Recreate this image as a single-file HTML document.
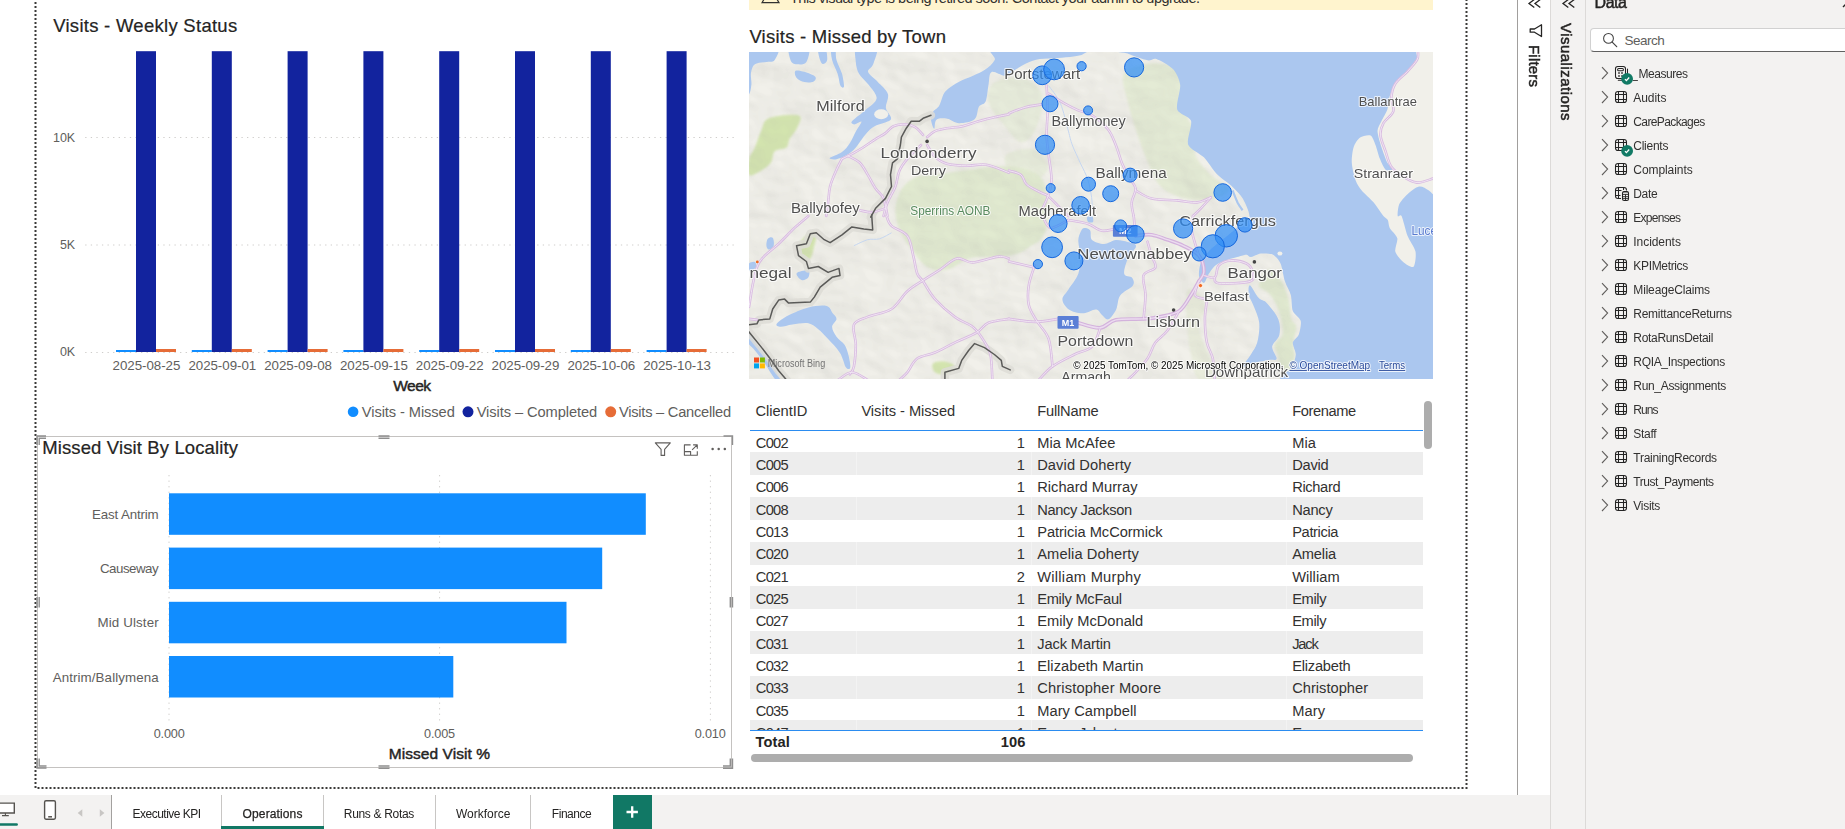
<!DOCTYPE html>
<html lang="en"><head><meta charset="utf-8"><title>Operations - Power BI</title>
<style>
html,body{margin:0;padding:0;background:#fff;}
body{width:1845px;height:829px;position:relative;overflow:hidden;font-family:"Liberation Sans",sans-serif;color:#252423;}
.t{position:absolute;white-space:pre;line-height:1;}
.abs{position:absolute;}
.g{color:#605e5c;}
svg{position:absolute;overflow:visible;}
</style></head><body>
<!-- report canvas -->
<div class="abs" id="canvas" style="left:0;top:0;width:1517px;height:795px;background:#fff;"></div>
<svg width="1845" height="829" style="left:0;top:0" id="canvas-border">
 <path d="M35.5 -2 V788 H1466.5 V-2" fill="none" stroke="#3b3a39" stroke-width="2" stroke-dasharray="2 2"/>
</svg>
<!-- Visits - Weekly Status (clustered column chart) -->
<section id="weekly">
<div class="t" style="left:53.20px;top:17.00px;font-size:18.5px;letter-spacing:0.275px;-webkit-text-stroke:0.2px #252423;">Visits - Weekly Status</div><svg width="1845" height="829" style="left:0;top:0"><line x1="85.2" x2="736" y1="137.5" y2="137.5" stroke="#cfcdcb" stroke-width="1" stroke-dasharray="1.3 4.28"/><line x1="85.2" x2="736" y1="245" y2="245" stroke="#cfcdcb" stroke-width="1" stroke-dasharray="1.3 4.28"/><line x1="85.2" x2="736" y1="352.5" y2="352.5" stroke="#cfcdcb" stroke-width="1" stroke-dasharray="1.3 4.28"/><rect x="116.0" y="350" width="20" height="2" fill="#118dff"/><rect x="136.0" y="51.2" width="20" height="300.8" fill="#12239e"/><rect x="156.0" y="349" width="20" height="3" fill="#e66c37"/><rect x="191.8" y="350" width="20" height="2" fill="#118dff"/><rect x="211.8" y="51.2" width="20" height="300.8" fill="#12239e"/><rect x="231.8" y="349" width="20" height="3" fill="#e66c37"/><rect x="267.6" y="350" width="20" height="2" fill="#118dff"/><rect x="287.6" y="51.2" width="20" height="300.8" fill="#12239e"/><rect x="307.6" y="349" width="20" height="3" fill="#e66c37"/><rect x="343.4" y="350" width="20" height="2" fill="#118dff"/><rect x="363.4" y="51.2" width="20" height="300.8" fill="#12239e"/><rect x="383.4" y="349" width="20" height="3" fill="#e66c37"/><rect x="419.2" y="350" width="20" height="2" fill="#118dff"/><rect x="439.2" y="51.2" width="20" height="300.8" fill="#12239e"/><rect x="459.2" y="349" width="20" height="3" fill="#e66c37"/><rect x="495.0" y="350" width="20" height="2" fill="#118dff"/><rect x="515.0" y="51.2" width="20" height="300.8" fill="#12239e"/><rect x="535.0" y="349" width="20" height="3" fill="#e66c37"/><rect x="570.8" y="350" width="20" height="2" fill="#118dff"/><rect x="590.8" y="51.2" width="20" height="300.8" fill="#12239e"/><rect x="610.8" y="349" width="20" height="3" fill="#e66c37"/><rect x="646.6" y="350" width="20" height="2" fill="#118dff"/><rect x="666.6" y="51.2" width="20" height="300.8" fill="#12239e"/><rect x="686.6" y="349" width="20" height="3" fill="#e66c37"/></svg>
<div class="t" style="left:52.95px;top:132.00px;font-size:12.5px;color:#605e5c;">10K</div><div class="t" style="left:59.90px;top:239.00px;font-size:12.5px;color:#605e5c;">5K</div><div class="t" style="left:59.90px;top:346.00px;font-size:12.5px;color:#605e5c;">0K</div><div class="t" style="left:112.60px;top:359.00px;font-size:13.33px;color:#605e5c;letter-spacing:-0.043px;">2025-08-25</div><div class="t" style="left:188.40px;top:359.00px;font-size:13.33px;color:#605e5c;letter-spacing:-0.043px;">2025-09-01</div><div class="t" style="left:264.20px;top:359.00px;font-size:13.33px;color:#605e5c;letter-spacing:-0.043px;">2025-09-08</div><div class="t" style="left:340.00px;top:359.00px;font-size:13.33px;color:#605e5c;letter-spacing:-0.043px;">2025-09-15</div><div class="t" style="left:415.80px;top:359.00px;font-size:13.33px;color:#605e5c;letter-spacing:-0.043px;">2025-09-22</div><div class="t" style="left:491.60px;top:359.00px;font-size:13.33px;color:#605e5c;letter-spacing:-0.043px;">2025-09-29</div><div class="t" style="left:567.40px;top:359.00px;font-size:13.33px;color:#605e5c;letter-spacing:-0.043px;">2025-10-06</div><div class="t" style="left:643.20px;top:359.00px;font-size:13.33px;color:#605e5c;letter-spacing:-0.043px;">2025-10-13</div><div class="t" style="left:393.30px;top:378.00px;font-size:15.5px;letter-spacing:-0.548px;-webkit-text-stroke:0.45px #252423;">Week</div><svg width="1845" height="829" style="left:0;top:0"><circle cx="353.1" cy="411.8" r="5.3" fill="#118dff"/><circle cx="468" cy="411.8" r="5.5" fill="#12239e"/><circle cx="610.7" cy="411.8" r="5.5" fill="#e66c37"/></svg><div class="t" style="left:361.80px;top:405.00px;font-size:14.67px;color:#605e5c;letter-spacing:-0.086px;">Visits - Missed</div><div class="t" style="left:476.70px;top:405.00px;font-size:14.67px;color:#605e5c;letter-spacing:-0.079px;">Visits – Completed</div><div class="t" style="left:618.90px;top:405.00px;font-size:14.67px;color:#605e5c;letter-spacing:-0.237px;">Visits – Cancelled</div>
</section>
<!-- Missed Visit By Locality (bar chart, selected) -->
<section id="locality">
<svg width="1845" height="829" style="left:0;top:0"><rect x="37.5" y="436.5" width="694" height="331" fill="none" stroke="#c4c2c0" stroke-width="1"/><g stroke="#8f8f8f" stroke-width="1.4" fill="none"><path d="M378.5 436 H389.5 M378.5 438.2 H389.5"/><path d="M378.5 766 H389.5 M378.5 768.2 H389.5"/><path d="M37 597 V607.5 M39.2 597 V607.5"/><path d="M730.3 597 V607.5 M732.5 597 V607.5"/><path d="M37 445 V436 H46 M39.2 445 V438.2 H46"/><path d="M723.5 436 H732.5 V445"/><path d="M37 758.5 V768 H46.5 M39.2 758.5 V766 H46.5"/><path d="M723 768.2 H732.5 V758.5 M723 766 H730.3 V758.5"/></g><line x1="169" x2="169" y1="475" y2="722" stroke="#cfcdcb" stroke-width="1" stroke-dasharray="1.3 4.25"/><line x1="439.6" x2="439.6" y1="475" y2="722" stroke="#cfcdcb" stroke-width="1" stroke-dasharray="1.3 4.25"/><line x1="710.4" x2="710.4" y1="475" y2="722" stroke="#cfcdcb" stroke-width="1" stroke-dasharray="1.3 4.25"/><rect x="169" y="493.3" width="476.8" height="41.5" fill="#118dff"/><rect x="169" y="547.6" width="433.2" height="41.5" fill="#118dff"/><rect x="169" y="601.8" width="397.5" height="41.5" fill="#118dff"/><rect x="169" y="656" width="284.3" height="41.5" fill="#118dff"/><g fill="none" stroke="#605e5c" stroke-width="1.1" stroke-linejoin="round"><path d="M655.3 442.9 H670.3 L664.6 449.4 V455.4 H661.1 V449.4 Z"/><path d="M690.6 444.9 H684.4 V455.2 H697.3 V451.3 M684.4 451.6 H690.6 V455.2 M693.1 444.9 H697.3 V448.7 M697 445.2 L692.1 449.8"/></g><g fill="#605e5c"><circle cx="712.6" cy="449" r="1.25"/><circle cx="718.7" cy="449" r="1.25"/><circle cx="724.8" cy="449" r="1.25"/></g></svg>
<div class="t" style="left:42.20px;top:439.00px;font-size:18.5px;letter-spacing:0.124px;-webkit-text-stroke:0.2px #252423;">Missed Visit By Locality</div><div class="t" style="left:92.10px;top:508.00px;font-size:13.33px;color:#605e5c;letter-spacing:-0.156px;">East Antrim</div><div class="t" style="left:100.00px;top:562.00px;font-size:13.33px;color:#605e5c;letter-spacing:-0.505px;">Causeway</div><div class="t" style="left:97.50px;top:616.00px;font-size:13.33px;color:#605e5c;letter-spacing:0.135px;">Mid Ulster</div><div class="t" style="left:52.70px;top:671.00px;font-size:13.33px;color:#605e5c;letter-spacing:0.103px;">Antrim/Ballymena</div><div class="t" style="left:153.70px;top:728.00px;font-size:12.7px;color:#605e5c;letter-spacing:-0.188px;">0.000</div><div class="t" style="left:424.10px;top:728.00px;font-size:12.7px;color:#605e5c;letter-spacing:-0.188px;">0.005</div><div class="t" style="left:694.70px;top:728.00px;font-size:12.7px;color:#605e5c;letter-spacing:-0.188px;">0.010</div><div class="t" style="left:388.70px;top:746.00px;font-size:15.5px;letter-spacing:0.062px;-webkit-text-stroke:0.45px #252423;">Missed Visit %</div>
</section>
<!-- Visits - Missed by Town (map) -->
<section id="town-map">
<div class="abs" style="left:749px;top:0;width:684px;height:9.7px;background:#fff4ce;overflow:hidden"></div><svg width="1845" height="12" style="left:0;top:0;overflow:hidden"><path d="M762 2.7 L770.5 -12 L779 2.7 Z" fill="none" stroke="#323130" stroke-width="1.2"/><path d="M770.5 -3 V-1" stroke="#323130" stroke-width="1.3"/></svg><div class="t" style="left:790.00px;top:-9.00px;font-size:14.5px;color:#323130;letter-spacing:-0.518px;">This visual type is being retired soon. Contact your admin to upgrade.</div><div class="t" style="left:749.40px;top:28.00px;font-size:18.5px;letter-spacing:0.228px;-webkit-text-stroke:0.2px #252423;">Visits - Missed by Town</div><svg id="map" width="684" height="327" viewBox="749 52 684 327" style="left:749px;top:52px;overflow:hidden" font-family="Liberation Sans, sans-serif">
<rect x="749" y="52" width="684" height="327" fill="#f1f0ea"/>
<defs><filter id="soft" x="-5%" y="-5%" width="110%" height="110%"><feGaussianBlur stdDeviation="1.3"/></filter></defs>
<g fill="#e1ead0" filter="url(#soft)">
<path d="M895.4 209.3 C895.7 202.7 898.0 194.7 901.3 189.4 C904.6 184.1 909.0 180.0 915.3 177.4 C921.6 174.9 929.9 175.6 939.2 174.3 C948.5 172.9 960.4 170.8 971.0 169.5 C981.6 168.1 993.6 166.3 1002.9 166.3 C1012.2 166.3 1020.0 167.0 1026.8 169.5 C1033.5 172.0 1040.0 174.8 1043.5 181.4 C1047.0 188.1 1047.6 201.3 1047.5 209.3 C1047.3 217.3 1046.2 222.6 1042.7 229.2 C1039.3 235.8 1033.4 244.5 1026.8 249.1 C1020.1 253.8 1012.2 255.6 1002.9 257.1 C993.6 258.5 980.3 255.8 971.0 257.9 C961.7 260.0 954.4 268.3 947.1 269.8 C939.8 271.4 933.2 270.5 927.2 267.0 C921.2 263.6 915.9 255.4 911.3 249.1 C906.6 242.8 902.0 235.8 899.3 229.2 C896.7 222.6 895.0 215.9 895.4 209.3Z"/>
<path opacity="0.6" d="M990.9 85.8 C993.9 81.5 1000.6 78.9 1006.9 77.9 C1013.2 76.9 1022.8 76.5 1028.8 79.9 C1034.7 83.2 1041.6 89.5 1042.7 97.8 C1043.8 106.1 1039.2 122.2 1035.5 129.6 C1031.9 137.1 1026.2 143.4 1020.8 142.4 C1015.4 141.4 1008.2 130.1 1002.9 123.7 C997.6 117.2 990.9 110.1 988.9 103.8 C986.9 97.5 987.9 90.2 990.9 85.8Z"/>
<path opacity="0.6" d="M1006.9 154.3 C1011.2 150.9 1028.0 147.0 1034.7 149.6 C1041.5 152.1 1048.5 164.0 1047.5 169.5 C1046.5 174.9 1035.2 182.1 1028.8 182.2 C1022.3 182.4 1012.5 174.9 1008.9 170.3 C1005.2 165.6 1002.5 157.8 1006.9 154.3Z"/>
<path opacity="0.8" d="M1123.9 73.9 C1127.5 67.5 1140.9 64.3 1149.7 63.5 C1158.6 62.7 1170.0 64.1 1176.8 69.1 C1183.6 74.2 1188.6 85.7 1190.4 93.8 C1192.2 101.9 1186.4 111.4 1187.6 117.7 C1188.8 124.0 1196.3 125.5 1197.5 131.6 C1198.8 137.7 1193.0 147.2 1195.1 154.3 C1197.3 161.4 1204.7 168.3 1210.3 174.3 C1215.8 180.2 1228.7 185.9 1228.6 190.2 C1228.5 194.4 1217.0 198.4 1209.5 199.7 C1202.0 201.1 1191.9 200.5 1183.6 198.1 C1175.3 195.8 1166.0 192.2 1159.7 185.4 C1153.4 178.6 1149.7 166.8 1145.8 157.5 C1141.8 148.2 1138.8 138.9 1135.8 129.6 C1132.8 120.4 1129.8 111.1 1127.8 101.8 C1125.8 92.5 1120.2 80.3 1123.9 73.9Z"/>
<path d="M1187.1 291.2 C1189.1 285.6 1196.0 290.2 1198.9 293.2 C1201.9 296.1 1204.9 303.4 1204.9 309.0 C1204.9 314.6 1198.3 319.2 1198.9 326.8 C1199.6 334.4 1204.9 345.6 1208.8 354.5 C1212.8 363.4 1224.3 375.8 1222.7 380.0 C1221.0 384.3 1204.2 384.3 1198.9 380.0 C1193.7 375.8 1193.0 363.4 1191.0 354.5 C1189.1 345.6 1187.7 337.4 1187.1 326.8 C1186.4 316.3 1185.1 296.8 1187.1 291.2Z" opacity="0.55"/>
<path d="M1268.7 269.4 C1272.5 268.8 1278.2 276.3 1281.5 281.3 C1284.8 286.2 1286.8 292.8 1288.5 299.1 C1290.1 305.4 1290.1 314.3 1291.4 318.9 C1292.7 323.5 1296.0 322.8 1296.4 326.8 C1296.7 330.7 1293.7 337.3 1293.4 342.6 C1293.1 347.9 1294.9 352.2 1294.4 358.4 C1293.9 364.7 1292.6 376.4 1290.4 380.0 C1288.3 383.6 1283.5 383.6 1281.5 380.0 C1279.6 376.4 1279.7 364.3 1278.6 358.4 C1277.4 352.5 1273.9 348.5 1274.6 344.6 C1275.3 340.6 1281.5 339.0 1282.5 334.7 C1283.6 330.4 1282.1 324.1 1280.9 318.9 C1279.8 313.6 1277.8 307.5 1275.6 303.0 C1273.4 298.6 1270.5 295.1 1267.7 292.2 C1264.9 289.2 1258.6 289.0 1258.8 285.2 C1258.9 281.4 1264.9 270.1 1268.7 269.4Z"/>
<path d="M1005.0 220.0 C1007.7 215.0 1013.9 216.3 1020.9 216.0 C1027.8 215.7 1043.3 214.0 1046.6 218.0 C1049.9 221.9 1044.9 234.8 1040.7 239.7 C1036.4 244.7 1026.8 246.7 1020.9 247.7 C1014.9 248.6 1007.7 250.3 1005.0 245.7 C1002.4 241.1 1002.4 224.9 1005.0 220.0Z"/>
</g>
<g fill="#d3e4ae" filter="url(#soft)">
<path d="M768.8 118.3 C775.1 115.6 793.7 113.8 798.5 115.3 C803.2 116.8 799.0 123.2 797.5 127.2 C796.0 131.1 791.4 135.7 789.6 139.1 C787.7 142.4 789.1 145.3 786.6 147.4 C784.1 149.4 777.4 148.8 774.7 151.3 C772.1 153.9 773.1 159.6 770.8 162.8 C768.5 166.0 764.5 168.7 760.9 170.7 C757.2 172.8 751.0 177.0 749.0 175.1 C747.0 173.1 748.0 163.5 749.0 158.8 C750.0 154.2 753.0 151.9 754.9 147.4 C756.9 142.8 758.6 136.4 760.9 131.5 C763.2 126.7 762.5 121.0 768.8 118.3Z"/>
<path d="M798.5 245.7 C799.5 241.6 805.4 235.8 808.4 233.8 C811.3 231.8 815.3 231.8 816.3 233.8 C817.3 235.8 815.3 241.6 814.3 245.7 C813.3 249.8 812.3 256.4 810.3 258.5 C808.4 260.7 804.4 260.7 802.4 258.5 C800.4 256.4 797.5 249.8 798.5 245.7Z"/>
<path d="M933.0 363.4 C934.7 361.6 941.3 360.9 944.9 361.4 C948.5 361.9 954.4 364.2 954.8 366.4 C955.1 368.5 950.2 373.3 946.9 374.3 C943.6 375.3 937.3 374.1 935.0 372.3 C932.7 370.5 931.4 365.2 933.0 363.4Z"/>
</g>
<defs><filter id="relief" x="0" y="0" width="100%" height="100%"><feTurbulence type="fractalNoise" baseFrequency="0.022 0.028" numOctaves="3" seed="11" result="n"/><feDiffuseLighting in="n" surfaceScale="2.6" diffuseConstant="1" lighting-color="#fff" result="l"><feDistantLight azimuth="315" elevation="55"/></feDiffuseLighting><feColorMatrix in="l" type="matrix" values="0 0 0 0 0.45  0 0 0 0 0.45  0 0 0 0 0.42  -2.2 0 0 0 1.95"/></filter></defs>
<rect x="749" y="52" width="684" height="327" filter="url(#relief)" opacity="0.5"/>
<g fill="#abc7ef">
<path d="M743.1 46.1 C737.5 54.5 742.1 88.4 743.1 96.5 C744.1 104.6 747.6 96.5 749.0 94.5 C750.4 92.6 751.0 88.3 751.4 84.6 C751.7 81.0 750.4 76.2 751.0 72.8 C751.6 69.4 752.3 66.1 754.9 64.3 C757.6 62.5 763.5 62.6 766.8 61.9 C770.1 61.2 773.1 62.6 774.7 59.9 C776.4 57.3 782.0 48.4 776.7 46.1 C771.4 43.8 748.7 37.7 743.1 46.1Z"/>
<path d="M789.6 46.1 C786.7 48.5 789.6 57.9 790.9 60.9 C792.3 63.9 794.9 64.1 797.5 64.3 C800.0 64.4 804.6 64.9 806.4 61.9 C808.2 58.9 811.2 48.7 808.4 46.1 C805.6 43.4 792.5 43.6 789.6 46.1Z"/>
<path d="M795.5 70.8 C796.8 69.8 801.1 70.8 804.4 71.8 C807.7 72.8 813.8 75.1 815.3 76.7 C816.8 78.4 815.1 80.8 813.3 81.7 C811.5 82.6 807.2 82.7 804.4 82.1 C801.6 81.4 798.0 79.6 796.5 77.7 C795.0 75.8 794.2 71.8 795.5 70.8Z"/>
<path d="M835.3 48.0 C836.2 50.0 835.3 55.6 836.5 59.9 C837.6 64.2 840.7 69.3 842.0 73.8 C843.2 78.2 844.2 84.6 844.0 86.6 C843.7 88.6 841.5 87.8 840.4 85.6 C839.4 83.5 839.0 78.1 837.6 73.8 C836.3 69.5 833.2 64.2 832.1 59.9 C831.0 55.6 830.6 50.0 831.1 48.0 C831.6 46.1 834.4 46.1 835.3 48.0Z"/>
<path d="M818.3 48.0 C819.2 46.4 823.7 46.1 825.2 48.0 C826.7 50.0 827.6 57.3 827.2 59.9 C826.7 62.6 823.9 64.2 822.6 63.9 C821.3 63.5 820.2 60.6 819.4 57.9 C818.7 55.3 817.3 49.7 818.3 48.0Z"/>
<path d="M856.8 46.1 C860.3 43.4 873.9 43.1 876.6 46.1 C879.4 49.0 874.7 59.6 873.3 63.9 C871.8 68.2 867.4 68.8 868.1 71.8 C868.8 74.8 874.3 78.0 877.6 81.7 C880.9 85.4 886.5 89.6 887.9 93.9 C889.3 98.3 885.4 103.8 885.9 107.8 C886.4 111.8 890.8 115.4 891.1 117.7 C891.3 120.0 890.0 120.3 887.5 121.6 C885.0 123.0 879.3 124.0 876.0 125.6 C872.8 127.3 870.8 128.9 868.1 131.5 C865.5 134.2 862.5 138.5 860.2 141.4 C857.9 144.4 856.6 147.0 854.3 149.3 C852.0 151.7 849.3 153.6 846.3 155.3 C843.4 156.9 839.2 158.8 836.5 159.2 C833.7 159.7 828.8 159.2 829.7 158.1 C830.7 156.9 838.6 154.6 842.0 152.1 C845.4 149.6 847.6 146.4 849.9 143.0 C852.2 139.6 853.9 135.1 855.8 131.5 C857.8 128.0 861.7 122.8 861.4 121.6 C861.1 120.5 855.8 124.5 854.3 124.4 C852.7 124.4 850.3 123.4 851.9 121.3 C853.5 119.1 859.9 114.7 863.8 111.4 C867.7 108.1 873.3 104.3 875.2 101.5 C877.2 98.7 876.9 97.5 875.6 94.5 C874.4 91.6 870.5 87.1 867.7 83.7 C864.9 80.2 861.0 77.4 859.0 73.8 C857.0 70.1 856.2 66.5 855.8 61.9 C855.5 57.3 853.4 48.7 856.8 46.1Z"/>
<path d="M996.3 46.1 C1011.4 43.8 1070.9 44.7 1085.4 46.1 C1099.9 47.4 1085.4 52.3 1083.4 54.0 C1081.4 55.7 1077.8 55.7 1073.5 56.4 C1069.2 57.0 1063.3 57.5 1057.7 57.9 C1052.1 58.4 1045.1 58.2 1039.9 59.1 C1034.6 60.0 1030.6 61.4 1026.0 63.5 C1021.4 65.6 1015.8 69.7 1012.2 71.8 C1008.5 73.8 1007.7 75.7 1004.2 75.7 C1000.8 75.8 994.0 70.5 991.4 72.2 C988.7 73.8 989.4 80.8 988.4 85.6 C987.5 90.5 987.2 97.9 985.6 101.5 C984.1 105.0 980.8 103.8 978.9 106.8 C977.1 109.8 977.9 116.5 974.6 119.3 C971.3 122.0 963.7 123.3 959.1 123.2 C954.6 123.1 951.1 119.3 947.3 118.7 C943.5 118.1 938.6 118.0 936.4 119.7 C934.2 121.4 935.1 128.8 934.2 128.8 C933.3 128.8 931.2 122.5 931.0 119.7 C930.8 116.8 931.6 114.1 933.0 111.8 C934.4 109.4 937.3 108.8 939.3 105.4 C941.4 102.1 942.0 95.5 945.3 91.6 C948.6 87.6 954.5 84.3 959.1 81.7 C963.7 79.0 968.7 77.7 973.0 75.7 C977.3 73.8 981.2 72.4 984.9 69.8 C988.5 67.2 992.8 63.9 994.7 59.9 C996.7 56.0 981.2 48.4 996.3 46.1Z"/>
<path d="M1084.2 227.9 C1085.7 227.8 1088.8 228.2 1090.1 230.2 C1091.4 232.3 1089.8 237.8 1092.1 240.1 C1094.4 242.4 1100.0 244.1 1104.0 244.1 C1107.9 244.1 1111.9 240.5 1115.8 240.1 C1119.8 239.8 1124.4 241.1 1127.7 242.1 C1131.1 243.1 1136.0 243.4 1136.0 246.1 C1136.1 248.7 1130.1 253.3 1128.1 257.9 C1126.1 262.6 1123.5 270.5 1124.2 273.8 C1124.8 277.1 1130.6 275.8 1132.1 277.7 C1133.5 279.7 1134.8 282.7 1132.9 285.6 C1130.9 288.6 1123.0 291.6 1120.2 295.5 C1117.4 299.5 1118.2 305.4 1116.2 309.4 C1114.3 313.3 1110.7 318.4 1108.3 319.3 C1106.0 320.2 1104.0 316.6 1102.0 314.9 C1100.0 313.3 1099.3 309.7 1096.1 309.4 C1092.8 309.1 1087.2 313.3 1082.6 313.3 C1078.1 313.3 1072.1 311.7 1068.8 309.4 C1065.4 307.1 1062.5 302.8 1062.4 299.5 C1062.4 296.2 1065.7 293.9 1068.4 289.6 C1071.0 285.3 1076.3 279.4 1078.3 273.8 C1080.2 268.2 1080.2 261.6 1080.2 256.0 C1080.2 250.4 1078.1 244.3 1078.3 240.1 C1078.4 236.0 1080.2 232.9 1081.2 230.8 C1082.2 228.8 1082.7 228.0 1084.2 227.9Z"/>
<path d="M1087.2 217.0 C1087.8 216.0 1091.1 215.2 1092.1 216.0 C1093.1 216.8 1093.8 220.9 1093.1 221.9 C1092.4 222.9 1089.1 222.8 1088.1 221.9 C1087.2 221.1 1086.5 218.0 1087.2 217.0Z"/>
<path d="M1119.8 46.1 C1075.5 49.2 1124.0 51.7 1127.7 53.6 C1131.4 55.5 1143.7 59.6 1147.5 60.3 C1151.3 61.0 1153.0 57.7 1156.4 58.9 C1159.8 60.1 1170.1 65.7 1173.2 69.2 C1176.4 72.7 1179.6 79.7 1180.2 85.0 C1180.7 90.4 1175.7 104.6 1177.2 109.4 C1178.6 114.1 1189.6 116.0 1191.0 120.7 C1192.5 125.3 1186.4 139.5 1188.1 144.4 C1189.8 149.3 1200.1 153.3 1203.9 157.3 C1207.7 161.2 1212.9 170.1 1216.8 174.1 C1220.6 178.0 1229.1 183.6 1232.6 186.9 C1236.1 190.2 1240.6 194.9 1242.9 198.8 C1245.1 202.7 1249.7 212.7 1249.4 216.0 C1249.2 219.4 1243.3 221.9 1241.0 224.0 C1238.7 226.1 1234.5 229.9 1232.0 232.0 C1229.5 234.1 1224.9 237.6 1222.0 240.0 C1219.1 242.4 1212.8 247.1 1210.0 250.0 C1207.2 252.9 1202.5 258.5 1201.0 262.0 C1199.5 265.5 1198.6 273.2 1199.0 276.0 C1199.4 278.8 1202.7 283.3 1204.0 283.0 C1205.3 282.7 1207.4 276.1 1208.8 273.8 C1210.3 271.5 1212.7 267.6 1214.8 265.9 C1216.9 264.1 1221.5 261.9 1224.7 260.7 C1227.8 259.5 1235.6 257.6 1238.5 256.8 C1241.4 256.0 1244.8 254.7 1246.4 254.8 C1248.1 254.8 1249.0 257.3 1250.9 257.1 C1252.8 257.0 1257.9 253.9 1260.8 253.6 C1263.7 253.2 1270.0 253.3 1272.6 254.6 C1275.3 255.9 1278.9 259.9 1280.5 263.5 C1282.2 267.0 1283.5 277.1 1284.9 281.3 C1286.3 285.5 1289.8 291.2 1290.8 295.1 C1291.9 299.1 1291.5 307.5 1292.8 311.0 C1294.1 314.4 1299.9 317.7 1300.7 320.8 C1301.5 324.0 1299.8 331.8 1298.7 334.7 C1297.7 337.6 1293.2 340.0 1292.8 342.6 C1292.4 345.2 1295.8 351.3 1295.8 354.5 C1295.8 357.6 1293.8 362.1 1292.8 366.3 C1291.8 370.6 1266.2 381.6 1288.5 386.1 C1310.7 390.6 1437.1 447.5 1460.0 400.0 C1482.9 352.5 1505.4 77.2 1460.0 30.0 C1414.6 -17.2 1164.1 42.9 1119.8 46.1Z"/>
<path d="M1249.9 285.2 C1251.5 285.7 1256.0 295.1 1258.8 298.1 C1261.6 301.1 1263.5 299.6 1266.7 303.0 C1269.9 306.5 1276.1 313.6 1278.2 318.9 C1280.3 324.1 1280.3 330.1 1279.4 334.7 C1278.4 339.3 1272.7 342.5 1272.2 346.6 C1271.8 350.6 1277.2 356.6 1276.6 358.8 C1276.0 361.1 1273.0 359.3 1268.7 360.0 C1264.4 360.8 1255.2 362.3 1250.9 363.4 C1246.6 364.4 1243.0 367.8 1243.0 366.3 C1243.0 364.9 1248.5 358.4 1250.9 354.5 C1253.2 350.5 1255.8 347.9 1257.2 342.6 C1258.6 337.3 1259.8 329.1 1259.2 322.8 C1258.5 316.6 1255.0 309.6 1253.2 305.0 C1251.5 300.4 1249.5 298.4 1248.9 295.1 C1248.3 291.8 1248.2 284.7 1249.9 285.2Z"/>
<path d="M776.7 323.8 C778.0 321.9 783.3 318.1 788.6 315.3 C793.8 312.6 802.0 309.0 808.4 307.4 C814.7 305.9 822.5 305.1 826.6 306.0 C830.6 307.0 830.8 310.8 832.5 313.0 C834.1 315.1 836.5 316.6 836.5 318.9 C836.4 321.2 832.1 323.8 832.1 326.8 C832.1 329.8 834.4 333.7 836.5 336.7 C838.5 339.7 842.4 341.6 844.4 344.6 C846.3 347.6 847.3 350.7 848.3 354.5 C849.3 358.3 850.7 365.2 850.3 367.4 C849.9 369.5 847.7 369.8 846.0 367.4 C844.2 365.0 843.0 357.6 840.0 352.9 C837.0 348.2 831.8 343.0 828.1 339.1 C824.5 335.1 821.5 331.8 818.3 329.2 C815.0 326.5 812.6 324.0 808.4 323.2 C804.1 322.5 797.1 323.8 792.5 324.4 C787.9 325.0 783.3 326.9 780.7 326.8 C778.0 326.7 775.4 325.7 776.7 323.8Z"/>
<path d="M767.8 238.8 C768.9 237.4 771.8 236.6 772.7 237.8 C773.7 238.9 774.4 243.7 773.7 245.7 C773.1 247.7 770.0 249.6 768.8 249.6 C767.6 249.6 766.6 247.5 766.4 245.7 C766.2 243.9 766.7 240.1 767.8 238.8Z"/>
<path d="M797.5 272.4 C799.3 271.4 806.5 269.6 808.4 270.4 C810.2 271.2 809.3 275.7 808.4 277.3 C807.4 279.0 804.2 280.5 802.4 280.3 C800.6 280.1 798.3 277.7 797.5 276.3 C796.7 275.0 795.7 273.4 797.5 272.4Z"/>
<path d="M749.0 263.5 C750.0 262.1 753.8 261.2 754.9 261.9 C756.1 262.6 756.9 266.0 755.9 267.4 C754.9 268.9 750.2 271.1 749.0 270.4 C747.8 269.8 748.0 264.9 749.0 263.5Z"/>
<path d="M748.0 332.7 C749.0 332.4 751.5 337.4 753.9 340.7 C756.4 344.0 759.7 348.2 762.9 352.5 C766.0 356.8 769.8 361.8 772.7 366.4 C775.7 371.0 780.2 377.8 780.7 380.0 C781.2 382.3 778.3 382.8 775.7 380.0 C773.1 377.3 768.3 368.3 764.8 363.4 C761.4 358.5 757.7 354.0 754.9 350.5 C752.1 347.1 749.2 345.6 748.0 342.6 C746.9 339.7 747.0 333.1 748.0 332.7Z"/>
</g>
<g fill="#f1f0ea">
<path d="M1418.0 46.1 C1412.8 47.9 1418.5 56.5 1417.0 59.9 C1415.6 63.3 1410.1 68.6 1407.2 71.8 C1404.2 74.9 1397.7 80.2 1395.3 83.7 C1392.9 87.1 1390.4 94.1 1389.3 97.5 C1388.3 100.9 1388.4 106.2 1387.4 109.4 C1386.3 112.5 1382.8 118.3 1381.4 121.2 C1380.1 124.1 1377.5 127.7 1377.5 131.1 C1377.5 134.6 1380.1 142.7 1381.4 147.0 C1382.8 151.2 1385.8 159.8 1387.4 162.8 C1389.0 165.7 1393.5 168.2 1393.3 169.1 C1393.1 170.1 1387.6 171.3 1385.8 169.9 C1384.0 168.5 1381.2 162.1 1379.9 158.8 C1378.5 155.5 1376.7 148.1 1375.5 145.0 C1374.3 141.9 1372.6 136.5 1370.6 135.5 C1368.5 134.5 1362.3 135.9 1360.1 137.5 C1357.8 139.0 1354.8 143.6 1353.7 147.0 C1352.6 150.3 1351.5 158.3 1351.8 162.8 C1352.0 167.3 1354.4 176.9 1355.7 180.6 C1357.0 184.3 1359.3 187.6 1361.7 190.5 C1364.0 193.4 1370.6 198.9 1373.5 202.3 C1376.4 205.7 1381.5 213.6 1383.4 216.0 C1385.3 218.3 1386.9 218.4 1387.8 220.0 C1388.6 221.5 1388.5 225.4 1389.7 227.9 C1391.0 230.3 1396.5 235.0 1397.3 238.2 C1398.0 241.3 1394.5 248.4 1395.3 251.6 C1396.1 254.8 1400.8 259.9 1403.2 261.9 C1405.6 263.9 1411.8 268.2 1413.5 266.8 C1415.1 265.5 1416.3 255.7 1415.5 251.6 C1414.7 247.5 1409.4 240.5 1407.5 235.8 C1405.7 231.0 1402.9 218.6 1401.6 216.0 C1400.3 213.4 1398.0 217.6 1397.7 216.0 C1397.3 214.4 1398.0 207.2 1399.2 204.3 C1400.5 201.4 1404.5 196.8 1407.2 194.4 C1409.8 192.1 1416.1 187.0 1419.0 186.5 C1421.9 186.0 1426.0 188.4 1428.9 190.5 C1431.8 192.6 1437.1 198.9 1440.8 202.3 C1444.5 205.7 1454.5 236.8 1456.6 216.0 C1458.7 195.2 1461.7 68.7 1456.6 46.1 C1451.5 23.4 1423.3 44.2 1418.0 46.1Z"/>
<ellipse cx="881.2" cy="114.3" rx="7" ry="5"/>
<ellipse cx="1279.9" cy="253.6" rx="2.5" ry="2"/>
</g>
<path d="M1232.6 190.5 C1233.4 192.5 1235.9 199.1 1237.5 202.4 C1239.2 205.7 1241.7 209.0 1242.5 210.3" fill="none" stroke="#abc7ef" stroke-width="2.2"/>
<g fill="none" stroke="#c5d6f0" stroke-width="1">
<path d="M1048.6 85.6 C1050.6 88.6 1057.1 95.9 1060.4 103.4 C1063.7 111.0 1066.4 124.2 1068.4 131.1 C1070.3 138.1 1070.3 139.7 1072.3 145.0 C1074.3 150.3 1077.6 156.9 1080.2 162.8 C1082.9 168.7 1086.2 174.0 1088.1 180.6 C1090.1 187.2 1091.8 196.5 1092.1 202.4 C1092.4 208.3 1090.5 213.8 1090.1 216.0"/>
<path d="M853.9 245.7 C856.2 244.7 863.4 240.9 867.7 239.7 C872.0 238.6 875.6 239.9 879.6 238.8 C883.5 237.6 889.5 233.8 891.5 232.8"/>
</g>
<g fill="none" stroke-linejoin="round" stroke-linecap="round">
<path d="M931.0 115.3 L923.1 118.3 L919.2 121.3 L911.2 121.3 L906.3 128.2 L901.4 137.1 L900.4 145.0 L897.4 158.8 L892.5 162.8 L890.5 174.7 L891.5 186.5 L885.5 198.4 L875.6 208.3 L870.7 217.2" stroke="#dddcd6" stroke-width="8.5" opacity="0.85"/>
<path d="M871.7 215.0 L872.7 229.9 L863.8 228.9 L851.9 226.9 L842.0 234.8 L830.1 242.7 L824.2 239.7 L816.3 232.8 L810.3 233.8 L806.4 243.7 L796.5 245.7 L798.5 255.6 L806.4 261.5 L808.4 268.4 L818.3 266.5 L828.1 272.4 L839.0 268.4 L840.0 275.4 L832.1 277.3 L820.2 287.2 L814.3 297.1 L810.3 302.1 L788.6 303.1 L784.6 299.1 L778.7 300.1 L772.7 309.0 L769.8 318.9 L758.9 319.9 L756.9 323.8 L748.0 324.8" stroke="#dddcd6" stroke-width="8.5" opacity="0.85"/>
<path d="M748.0 330.8 L760.9 346.6 L770.8 359.5 L778.7 370.7 L787.6 381.2" stroke="#dddcd6" stroke-width="8.5" opacity="0.85"/>
<path d="M944.9 381.2 L944.9 372.3 L958.7 368.4 L961.7 360.4 L968.6 350.5 L974.6 343.6 L984.5 347.6 L994.4 354.5 L1001.3 360.4 L1002.3 366.4 L1010.2 369.9" stroke="#dddcd6" stroke-width="8.5" opacity="0.85"/>
<path d="M927.1 137.1 C928.4 136.1 931.7 132.6 935.0 131.1 C938.3 129.7 942.2 129.0 946.9 128.2 C951.5 127.4 957.4 127.4 962.7 126.2 C968.0 125.0 973.2 122.7 978.5 121.3 C983.8 119.8 989.3 118.4 994.4 117.3 C999.4 116.1 1006.6 114.8 1009.0 114.3" stroke="#d8bbe0" stroke-width="2.6"/>
<path d="M923.1 135.1 C921.8 133.8 918.2 129.0 915.2 127.2 C912.2 125.4 908.9 124.4 905.3 124.2 C901.7 124.1 896.7 124.7 893.4 126.2 C890.1 127.7 888.5 131.0 885.5 133.1 C882.6 135.3 879.3 136.8 875.6 139.1 C872.0 141.4 867.4 144.7 863.8 147.0 C860.1 149.3 857.5 150.9 853.9 152.9 C850.2 154.9 844.0 157.9 842.0 158.8" stroke="#d8bbe0" stroke-width="2.6"/>
<path d="M842.0 158.8 C841.0 160.8 838.0 166.1 836.1 170.7 C834.1 175.3 831.4 181.3 830.1 186.5 C828.8 191.8 828.8 197.5 828.1 202.4 C827.5 207.3 826.5 213.8 826.2 216.0" stroke="#d8bbe0" stroke-width="2.6"/>
<path d="M847.9 155.9 C849.9 157.0 856.5 159.7 859.8 162.8 C863.1 165.9 865.1 170.4 867.7 174.7 C870.4 179.0 873.0 184.6 875.6 188.5 C878.3 192.5 881.6 193.8 883.5 198.4 C885.5 203.0 886.8 213.1 887.5 216.0" stroke="#d8bbe0" stroke-width="2.6"/>
<path d="M927.1 145.0 C928.4 147.0 931.7 153.7 935.0 156.9 C938.3 160.0 941.6 162.3 946.9 163.8 C952.1 165.3 960.1 165.6 966.6 165.8 C973.2 165.9 979.4 163.6 986.4 164.8 C993.5 165.9 1005.2 171.4 1009.0 172.7" stroke="#d8bbe0" stroke-width="2.6"/>
<path d="M921.1 145.0 C918.8 147.3 910.9 154.6 907.3 158.8 C903.7 163.1 901.4 166.1 899.4 170.7 C897.4 175.3 897.4 181.3 895.4 186.5 C893.4 191.8 889.5 197.5 887.5 202.4 C885.5 207.3 884.2 213.8 883.5 216.0" stroke="#d8bbe0" stroke-width="2.6"/>
<path d="M859.8 210.3 C861.8 210.6 867.4 212.6 871.7 212.3 C876.0 211.9 883.2 209.0 885.5 208.3" stroke="#d8bbe0" stroke-width="2.6"/>
<path d="M808.4 216.0 C806.1 218.0 799.5 223.3 794.5 227.9 C789.6 232.5 784.0 238.8 778.7 243.7 C773.4 248.6 766.5 253.6 762.9 257.6 C759.2 261.5 758.6 263.2 756.9 267.4 C755.3 271.7 754.3 276.7 753.0 283.3 C751.6 289.9 749.7 303.1 749.0 307.0" stroke="#d8bbe0" stroke-width="2.6"/>
<path d="M886.5 216.0 C887.3 217.6 888.0 222.6 891.5 225.9 C894.9 229.2 903.7 230.8 907.3 235.8 C910.9 240.7 911.6 249.3 913.2 255.6 C914.9 261.8 915.5 269.1 917.2 273.4 C918.8 277.7 920.2 277.0 923.1 281.3 C926.1 285.6 929.7 293.2 935.0 299.1 C940.3 305.0 948.5 312.3 954.8 316.9 C961.0 321.5 968.0 323.2 972.6 326.8 C977.2 330.4 979.5 334.1 982.5 338.7 C985.4 343.3 988.7 347.6 990.4 354.5 C992.0 361.4 992.0 375.8 992.4 380.0" stroke="#d8bbe0" stroke-width="2.6"/>
<path d="M1009.0 258.5 C1007.2 258.2 1004.4 255.9 998.3 256.6 C992.2 257.2 979.5 262.2 972.6 262.5 C965.7 262.8 962.4 257.2 956.8 258.5 C951.2 259.9 944.6 266.8 938.9 270.4 C933.3 274.0 928.4 276.8 923.1 280.3 C917.8 283.8 912.6 286.4 907.3 291.2 C902.0 296.0 898.1 304.7 891.5 309.0 C884.9 313.3 874.0 314.3 867.7 316.9 C861.5 319.5 855.8 320.2 853.9 324.8 C851.9 329.4 855.8 337.7 855.8 344.6 C855.8 351.5 854.9 361.4 853.9 366.4 C852.9 371.3 850.6 373.0 849.9 374.3" stroke="#d8bbe0" stroke-width="2.6"/>
<path d="M1009.0 318.9 C1005.6 319.5 993.8 320.5 988.4 322.8 C983.0 325.2 982.1 329.4 976.5 332.7 C970.9 336.0 961.7 339.3 954.8 342.6 C947.9 345.9 941.3 349.9 935.0 352.5 C928.7 355.2 921.8 355.2 917.2 358.5 C912.6 361.8 910.3 368.7 907.3 372.3 C904.3 375.9 900.7 378.7 899.4 380.0" stroke="#d8bbe0" stroke-width="2.6"/>
<path d="M838.0 380.0 C840.3 378.7 846.9 372.3 851.9 372.3 C856.8 372.3 865.1 378.7 867.7 380.0" stroke="#d8bbe0" stroke-width="2.6"/>
<path d="M749.0 318.9 L756.9 319.9" stroke="#d8bbe0" stroke-width="2.6"/>
<path d="M1046.6 85.6 C1046.8 89.9 1047.6 103.1 1047.6 111.4 C1047.6 119.6 1046.4 127.8 1046.6 135.1 C1046.8 142.4 1047.7 147.6 1048.6 154.9 C1049.4 162.1 1051.5 172.0 1051.5 178.6 C1051.5 185.2 1050.1 189.5 1048.6 194.5 C1047.1 199.4 1043.6 206.0 1042.6 208.3" stroke="#d8bbe0" stroke-width="2.6"/>
<path d="M1048.6 93.6 C1051.2 95.2 1059.5 100.6 1064.4 103.4 C1069.3 106.2 1073.6 108.4 1078.3 110.4 C1082.9 112.3 1087.2 112.2 1092.1 115.3 C1097.0 118.4 1104.0 124.2 1107.9 129.2 C1111.9 134.1 1113.5 139.4 1115.8 145.0 C1118.2 150.6 1119.5 157.2 1121.8 162.8 C1124.1 168.4 1127.4 174.3 1129.7 178.6 C1132.0 182.9 1135.3 184.6 1135.6 188.5 C1136.0 192.5 1132.0 197.8 1131.7 202.4 C1131.3 207.0 1133.3 213.8 1133.7 216.0" stroke="#d8bbe0" stroke-width="2.6"/>
<path d="M1009.0 113.3 C1011.6 112.3 1019.4 108.9 1024.8 107.4 C1030.3 105.9 1038.8 104.9 1041.6 104.4" stroke="#d8bbe0" stroke-width="2.6"/>
<path d="M1009.0 170.7 C1011.0 171.4 1017.9 172.4 1020.9 174.7 C1023.8 177.0 1023.5 181.6 1026.8 184.6 C1030.1 187.5 1037.0 190.5 1040.7 192.5 C1044.3 194.5 1045.3 193.8 1048.6 196.4 C1051.9 199.1 1057.1 205.0 1060.4 208.3 C1063.7 211.6 1067.0 214.7 1068.4 216.0" stroke="#d8bbe0" stroke-width="2.6"/>
<path d="M1135.6 190.5 C1138.3 191.8 1144.5 196.8 1151.5 198.4 C1158.4 200.1 1169.6 199.7 1177.2 200.4 C1184.8 201.1 1191.4 202.9 1197.0 202.4 C1202.6 201.9 1208.5 198.3 1210.8 197.4" stroke="#d8bbe0" stroke-width="2.6"/>
<path d="M1210.8 197.4 C1209.2 199.2 1203.9 205.2 1200.9 208.3 C1198.0 211.4 1194.3 214.7 1193.0 216.0" stroke="#d8bbe0" stroke-width="2.6"/>
<path d="M1068.4 220.0 C1071.7 220.6 1082.5 222.1 1088.1 223.9 C1093.8 225.7 1096.7 230.0 1102.0 230.8 C1107.3 231.7 1114.2 228.0 1119.8 228.9 C1125.4 229.7 1133.0 234.6 1135.6 235.8" stroke="#d8bbe0" stroke-width="2.6"/>
<path d="M1143.5 318.9 C1143.9 314.9 1145.5 302.4 1145.5 295.1 C1145.5 287.9 1141.9 280.0 1143.5 275.4 C1145.2 270.7 1154.1 270.7 1155.4 267.4 C1156.7 264.1 1152.8 259.9 1151.5 255.6 C1150.1 251.3 1148.2 244.0 1147.5 241.7" stroke="#d8bbe0" stroke-width="2.6"/>
<path d="M1133.7 216.0 L1135.6 235.8" stroke="#d8bbe0" stroke-width="2.6"/>
<path d="M1034.7 265.5 C1033.7 268.8 1029.8 278.7 1028.8 285.3 C1027.8 291.8 1027.5 299.1 1028.8 305.0 C1030.1 311.0 1033.4 315.3 1036.7 320.9 C1040.0 326.5 1045.9 331.1 1048.6 338.7 C1051.2 346.3 1051.9 361.8 1052.5 366.4" stroke="#d8bbe0" stroke-width="2.6"/>
<path d="M1009.0 261.5 L1034.7 267.4" stroke="#d8bbe0" stroke-width="2.6"/>
<path d="M1009.0 318.9 C1013.3 319.4 1026.5 321.9 1034.7 321.9 C1043.0 321.9 1054.5 319.4 1058.5 318.9" stroke="#d8bbe0" stroke-width="2.6"/>
<path d="M1100.0 328.8 C1098.7 331.7 1096.4 342.3 1092.1 346.6 C1087.8 350.9 1080.9 351.2 1074.3 354.5 C1067.7 357.8 1058.5 362.1 1052.5 366.4 C1046.6 370.6 1041.0 377.8 1038.7 380.0" stroke="#d8bbe0" stroke-width="2.6"/>
<path d="M1179.2 311.0 C1177.2 314.3 1171.2 325.5 1167.3 330.8 C1163.3 336.0 1158.7 338.0 1155.4 342.6 C1152.1 347.2 1150.8 353.5 1147.5 358.5 C1144.2 363.4 1138.9 368.7 1135.6 372.3 C1132.3 375.9 1129.0 378.7 1127.7 380.0" stroke="#d8bbe0" stroke-width="2.6"/>
<path d="M1203.9 275.4 C1205.7 275.7 1212.3 279.0 1214.8 277.3 C1217.3 275.7 1216.1 268.3 1218.7 265.5 C1221.4 262.7 1226.0 260.8 1230.6 260.5 C1235.2 260.2 1242.8 261.7 1246.4 263.5 C1250.1 265.3 1251.7 268.4 1252.4 271.4 C1253.0 274.4 1256.0 279.3 1250.4 281.3 C1244.8 283.3 1224.7 283.9 1218.7 283.3 C1212.8 282.6 1215.4 278.3 1214.8 277.3" stroke="#d8bbe0" stroke-width="2.6"/>
<path d="M1206.9 301.1 C1206.5 304.0 1204.9 312.0 1204.9 318.9 C1204.9 325.8 1205.5 336.0 1206.9 342.6 C1208.2 349.2 1211.5 352.2 1212.8 358.5 C1214.1 364.7 1214.4 376.4 1214.8 380.0" stroke="#d8bbe0" stroke-width="2.6"/>
<path d="M1193.0 216.0 C1192.8 218.6 1191.0 225.2 1192.0 231.8 C1193.0 238.4 1197.8 251.6 1198.9 255.6" stroke="#d8bbe0" stroke-width="2.6"/>
<path d="M1042.6 216.0 C1044.0 218.0 1046.3 227.2 1050.6 227.9 C1054.8 228.5 1065.4 221.3 1068.4 220.0" stroke="#d8bbe0" stroke-width="2.6"/>
<path d="M1198.9 281.3 C1198.3 283.6 1194.0 292.2 1195.0 295.1 C1196.0 298.1 1202.9 298.1 1204.9 299.1 C1206.9 300.1 1206.5 300.8 1206.9 301.1" stroke="#d8bbe0" stroke-width="2.6"/>
<path d="M1418.0 52.0 C1417.9 53.3 1418.9 56.6 1417.0 59.9 C1415.2 63.2 1410.8 67.8 1407.2 71.8 C1403.5 75.7 1397.9 79.4 1395.3 83.7 C1392.6 87.9 1391.7 92.9 1391.3 97.5 C1391.0 102.1 1394.6 107.1 1393.3 111.3 C1392.0 115.6 1385.6 119.3 1383.4 123.2 C1381.3 127.2 1380.1 130.5 1380.4 135.1 C1380.8 139.7 1383.6 145.6 1385.4 150.9 C1387.2 156.2 1388.4 162.5 1391.3 166.7 C1394.3 171.0 1398.9 174.0 1403.2 176.6 C1407.5 179.3 1412.1 182.2 1417.0 182.6 C1422.0 182.9 1430.2 179.3 1432.9 178.6" stroke="#d8bbe0" stroke-width="2.6"/>
<path d="M1135.6 235.8 C1138.3 235.6 1146.2 234.1 1151.5 234.8 C1156.7 235.5 1162.0 237.9 1167.3 239.7 C1172.6 241.6 1177.8 243.0 1183.1 245.7 C1188.4 248.3 1195.5 251.3 1198.9 255.6 C1202.4 259.9 1203.9 267.1 1203.9 271.4 C1203.9 275.7 1199.8 279.6 1198.9 281.3" stroke="#d3b2dc" stroke-width="3.8"/>
<path d="M1078.3 322.8 C1081.9 323.7 1093.8 328.3 1100.0 327.8 C1106.3 327.3 1108.6 321.4 1115.8 319.9 C1123.1 318.4 1136.3 319.4 1143.5 318.9 C1150.8 318.4 1153.4 318.2 1159.4 316.9 C1165.3 315.6 1173.9 314.6 1179.2 311.0 C1184.4 307.3 1187.7 300.1 1191.0 295.1 C1194.3 290.2 1197.6 283.6 1198.9 281.3" stroke="#d3b2dc" stroke-width="3.8"/>
<path d="M927.1 137.1 C928.4 136.1 931.7 132.6 935.0 131.1 C938.3 129.7 942.2 129.0 946.9 128.2 C951.5 127.4 957.4 127.4 962.7 126.2 C968.0 125.0 973.2 122.7 978.5 121.3 C983.8 119.8 989.3 118.4 994.4 117.3 C999.4 116.1 1006.6 114.8 1009.0 114.3" stroke="#f3e9f5" stroke-width="0.9"/>
<path d="M923.1 135.1 C921.8 133.8 918.2 129.0 915.2 127.2 C912.2 125.4 908.9 124.4 905.3 124.2 C901.7 124.1 896.7 124.7 893.4 126.2 C890.1 127.7 888.5 131.0 885.5 133.1 C882.6 135.3 879.3 136.8 875.6 139.1 C872.0 141.4 867.4 144.7 863.8 147.0 C860.1 149.3 857.5 150.9 853.9 152.9 C850.2 154.9 844.0 157.9 842.0 158.8" stroke="#f3e9f5" stroke-width="0.9"/>
<path d="M842.0 158.8 C841.0 160.8 838.0 166.1 836.1 170.7 C834.1 175.3 831.4 181.3 830.1 186.5 C828.8 191.8 828.8 197.5 828.1 202.4 C827.5 207.3 826.5 213.8 826.2 216.0" stroke="#f3e9f5" stroke-width="0.9"/>
<path d="M847.9 155.9 C849.9 157.0 856.5 159.7 859.8 162.8 C863.1 165.9 865.1 170.4 867.7 174.7 C870.4 179.0 873.0 184.6 875.6 188.5 C878.3 192.5 881.6 193.8 883.5 198.4 C885.5 203.0 886.8 213.1 887.5 216.0" stroke="#f3e9f5" stroke-width="0.9"/>
<path d="M927.1 145.0 C928.4 147.0 931.7 153.7 935.0 156.9 C938.3 160.0 941.6 162.3 946.9 163.8 C952.1 165.3 960.1 165.6 966.6 165.8 C973.2 165.9 979.4 163.6 986.4 164.8 C993.5 165.9 1005.2 171.4 1009.0 172.7" stroke="#f3e9f5" stroke-width="0.9"/>
<path d="M921.1 145.0 C918.8 147.3 910.9 154.6 907.3 158.8 C903.7 163.1 901.4 166.1 899.4 170.7 C897.4 175.3 897.4 181.3 895.4 186.5 C893.4 191.8 889.5 197.5 887.5 202.4 C885.5 207.3 884.2 213.8 883.5 216.0" stroke="#f3e9f5" stroke-width="0.9"/>
<path d="M859.8 210.3 C861.8 210.6 867.4 212.6 871.7 212.3 C876.0 211.9 883.2 209.0 885.5 208.3" stroke="#f3e9f5" stroke-width="0.9"/>
<path d="M808.4 216.0 C806.1 218.0 799.5 223.3 794.5 227.9 C789.6 232.5 784.0 238.8 778.7 243.7 C773.4 248.6 766.5 253.6 762.9 257.6 C759.2 261.5 758.6 263.2 756.9 267.4 C755.3 271.7 754.3 276.7 753.0 283.3 C751.6 289.9 749.7 303.1 749.0 307.0" stroke="#f3e9f5" stroke-width="0.9"/>
<path d="M886.5 216.0 C887.3 217.6 888.0 222.6 891.5 225.9 C894.9 229.2 903.7 230.8 907.3 235.8 C910.9 240.7 911.6 249.3 913.2 255.6 C914.9 261.8 915.5 269.1 917.2 273.4 C918.8 277.7 920.2 277.0 923.1 281.3 C926.1 285.6 929.7 293.2 935.0 299.1 C940.3 305.0 948.5 312.3 954.8 316.9 C961.0 321.5 968.0 323.2 972.6 326.8 C977.2 330.4 979.5 334.1 982.5 338.7 C985.4 343.3 988.7 347.6 990.4 354.5 C992.0 361.4 992.0 375.8 992.4 380.0" stroke="#f3e9f5" stroke-width="0.9"/>
<path d="M1009.0 258.5 C1007.2 258.2 1004.4 255.9 998.3 256.6 C992.2 257.2 979.5 262.2 972.6 262.5 C965.7 262.8 962.4 257.2 956.8 258.5 C951.2 259.9 944.6 266.8 938.9 270.4 C933.3 274.0 928.4 276.8 923.1 280.3 C917.8 283.8 912.6 286.4 907.3 291.2 C902.0 296.0 898.1 304.7 891.5 309.0 C884.9 313.3 874.0 314.3 867.7 316.9 C861.5 319.5 855.8 320.2 853.9 324.8 C851.9 329.4 855.8 337.7 855.8 344.6 C855.8 351.5 854.9 361.4 853.9 366.4 C852.9 371.3 850.6 373.0 849.9 374.3" stroke="#f3e9f5" stroke-width="0.9"/>
<path d="M1009.0 318.9 C1005.6 319.5 993.8 320.5 988.4 322.8 C983.0 325.2 982.1 329.4 976.5 332.7 C970.9 336.0 961.7 339.3 954.8 342.6 C947.9 345.9 941.3 349.9 935.0 352.5 C928.7 355.2 921.8 355.2 917.2 358.5 C912.6 361.8 910.3 368.7 907.3 372.3 C904.3 375.9 900.7 378.7 899.4 380.0" stroke="#f3e9f5" stroke-width="0.9"/>
<path d="M838.0 380.0 C840.3 378.7 846.9 372.3 851.9 372.3 C856.8 372.3 865.1 378.7 867.7 380.0" stroke="#f3e9f5" stroke-width="0.9"/>
<path d="M749.0 318.9 L756.9 319.9" stroke="#f3e9f5" stroke-width="0.9"/>
<path d="M1046.6 85.6 C1046.8 89.9 1047.6 103.1 1047.6 111.4 C1047.6 119.6 1046.4 127.8 1046.6 135.1 C1046.8 142.4 1047.7 147.6 1048.6 154.9 C1049.4 162.1 1051.5 172.0 1051.5 178.6 C1051.5 185.2 1050.1 189.5 1048.6 194.5 C1047.1 199.4 1043.6 206.0 1042.6 208.3" stroke="#f3e9f5" stroke-width="0.9"/>
<path d="M1048.6 93.6 C1051.2 95.2 1059.5 100.6 1064.4 103.4 C1069.3 106.2 1073.6 108.4 1078.3 110.4 C1082.9 112.3 1087.2 112.2 1092.1 115.3 C1097.0 118.4 1104.0 124.2 1107.9 129.2 C1111.9 134.1 1113.5 139.4 1115.8 145.0 C1118.2 150.6 1119.5 157.2 1121.8 162.8 C1124.1 168.4 1127.4 174.3 1129.7 178.6 C1132.0 182.9 1135.3 184.6 1135.6 188.5 C1136.0 192.5 1132.0 197.8 1131.7 202.4 C1131.3 207.0 1133.3 213.8 1133.7 216.0" stroke="#f3e9f5" stroke-width="0.9"/>
<path d="M1009.0 113.3 C1011.6 112.3 1019.4 108.9 1024.8 107.4 C1030.3 105.9 1038.8 104.9 1041.6 104.4" stroke="#f3e9f5" stroke-width="0.9"/>
<path d="M1009.0 170.7 C1011.0 171.4 1017.9 172.4 1020.9 174.7 C1023.8 177.0 1023.5 181.6 1026.8 184.6 C1030.1 187.5 1037.0 190.5 1040.7 192.5 C1044.3 194.5 1045.3 193.8 1048.6 196.4 C1051.9 199.1 1057.1 205.0 1060.4 208.3 C1063.7 211.6 1067.0 214.7 1068.4 216.0" stroke="#f3e9f5" stroke-width="0.9"/>
<path d="M1135.6 190.5 C1138.3 191.8 1144.5 196.8 1151.5 198.4 C1158.4 200.1 1169.6 199.7 1177.2 200.4 C1184.8 201.1 1191.4 202.9 1197.0 202.4 C1202.6 201.9 1208.5 198.3 1210.8 197.4" stroke="#f3e9f5" stroke-width="0.9"/>
<path d="M1210.8 197.4 C1209.2 199.2 1203.9 205.2 1200.9 208.3 C1198.0 211.4 1194.3 214.7 1193.0 216.0" stroke="#f3e9f5" stroke-width="0.9"/>
<path d="M1068.4 220.0 C1071.7 220.6 1082.5 222.1 1088.1 223.9 C1093.8 225.7 1096.7 230.0 1102.0 230.8 C1107.3 231.7 1114.2 228.0 1119.8 228.9 C1125.4 229.7 1133.0 234.6 1135.6 235.8" stroke="#f3e9f5" stroke-width="0.9"/>
<path d="M1143.5 318.9 C1143.9 314.9 1145.5 302.4 1145.5 295.1 C1145.5 287.9 1141.9 280.0 1143.5 275.4 C1145.2 270.7 1154.1 270.7 1155.4 267.4 C1156.7 264.1 1152.8 259.9 1151.5 255.6 C1150.1 251.3 1148.2 244.0 1147.5 241.7" stroke="#f3e9f5" stroke-width="0.9"/>
<path d="M1133.7 216.0 L1135.6 235.8" stroke="#f3e9f5" stroke-width="0.9"/>
<path d="M1034.7 265.5 C1033.7 268.8 1029.8 278.7 1028.8 285.3 C1027.8 291.8 1027.5 299.1 1028.8 305.0 C1030.1 311.0 1033.4 315.3 1036.7 320.9 C1040.0 326.5 1045.9 331.1 1048.6 338.7 C1051.2 346.3 1051.9 361.8 1052.5 366.4" stroke="#f3e9f5" stroke-width="0.9"/>
<path d="M1009.0 261.5 L1034.7 267.4" stroke="#f3e9f5" stroke-width="0.9"/>
<path d="M1009.0 318.9 C1013.3 319.4 1026.5 321.9 1034.7 321.9 C1043.0 321.9 1054.5 319.4 1058.5 318.9" stroke="#f3e9f5" stroke-width="0.9"/>
<path d="M1100.0 328.8 C1098.7 331.7 1096.4 342.3 1092.1 346.6 C1087.8 350.9 1080.9 351.2 1074.3 354.5 C1067.7 357.8 1058.5 362.1 1052.5 366.4 C1046.6 370.6 1041.0 377.8 1038.7 380.0" stroke="#f3e9f5" stroke-width="0.9"/>
<path d="M1179.2 311.0 C1177.2 314.3 1171.2 325.5 1167.3 330.8 C1163.3 336.0 1158.7 338.0 1155.4 342.6 C1152.1 347.2 1150.8 353.5 1147.5 358.5 C1144.2 363.4 1138.9 368.7 1135.6 372.3 C1132.3 375.9 1129.0 378.7 1127.7 380.0" stroke="#f3e9f5" stroke-width="0.9"/>
<path d="M1203.9 275.4 C1205.7 275.7 1212.3 279.0 1214.8 277.3 C1217.3 275.7 1216.1 268.3 1218.7 265.5 C1221.4 262.7 1226.0 260.8 1230.6 260.5 C1235.2 260.2 1242.8 261.7 1246.4 263.5 C1250.1 265.3 1251.7 268.4 1252.4 271.4 C1253.0 274.4 1256.0 279.3 1250.4 281.3 C1244.8 283.3 1224.7 283.9 1218.7 283.3 C1212.8 282.6 1215.4 278.3 1214.8 277.3" stroke="#f3e9f5" stroke-width="0.9"/>
<path d="M1206.9 301.1 C1206.5 304.0 1204.9 312.0 1204.9 318.9 C1204.9 325.8 1205.5 336.0 1206.9 342.6 C1208.2 349.2 1211.5 352.2 1212.8 358.5 C1214.1 364.7 1214.4 376.4 1214.8 380.0" stroke="#f3e9f5" stroke-width="0.9"/>
<path d="M1193.0 216.0 C1192.8 218.6 1191.0 225.2 1192.0 231.8 C1193.0 238.4 1197.8 251.6 1198.9 255.6" stroke="#f3e9f5" stroke-width="0.9"/>
<path d="M1042.6 216.0 C1044.0 218.0 1046.3 227.2 1050.6 227.9 C1054.8 228.5 1065.4 221.3 1068.4 220.0" stroke="#f3e9f5" stroke-width="0.9"/>
<path d="M1198.9 281.3 C1198.3 283.6 1194.0 292.2 1195.0 295.1 C1196.0 298.1 1202.9 298.1 1204.9 299.1 C1206.9 300.1 1206.5 300.8 1206.9 301.1" stroke="#f3e9f5" stroke-width="0.9"/>
<path d="M1418.0 52.0 C1417.9 53.3 1418.9 56.6 1417.0 59.9 C1415.2 63.2 1410.8 67.8 1407.2 71.8 C1403.5 75.7 1397.9 79.4 1395.3 83.7 C1392.6 87.9 1391.7 92.9 1391.3 97.5 C1391.0 102.1 1394.6 107.1 1393.3 111.3 C1392.0 115.6 1385.6 119.3 1383.4 123.2 C1381.3 127.2 1380.1 130.5 1380.4 135.1 C1380.8 139.7 1383.6 145.6 1385.4 150.9 C1387.2 156.2 1388.4 162.5 1391.3 166.7 C1394.3 171.0 1398.9 174.0 1403.2 176.6 C1407.5 179.3 1412.1 182.2 1417.0 182.6 C1422.0 182.9 1430.2 179.3 1432.9 178.6" stroke="#f3e9f5" stroke-width="0.9"/>
<path d="M1135.6 235.8 C1138.3 235.6 1146.2 234.1 1151.5 234.8 C1156.7 235.5 1162.0 237.9 1167.3 239.7 C1172.6 241.6 1177.8 243.0 1183.1 245.7 C1188.4 248.3 1195.5 251.3 1198.9 255.6 C1202.4 259.9 1203.9 267.1 1203.9 271.4 C1203.9 275.7 1199.8 279.6 1198.9 281.3" stroke="#ecdcf0" stroke-width="1.4"/>
<path d="M1078.3 322.8 C1081.9 323.7 1093.8 328.3 1100.0 327.8 C1106.3 327.3 1108.6 321.4 1115.8 319.9 C1123.1 318.4 1136.3 319.4 1143.5 318.9 C1150.8 318.4 1153.4 318.2 1159.4 316.9 C1165.3 315.6 1173.9 314.6 1179.2 311.0 C1184.4 307.3 1187.7 300.1 1191.0 295.1 C1194.3 290.2 1197.6 283.6 1198.9 281.3" stroke="#ecdcf0" stroke-width="1.4"/>
<path d="M931.0 115.3 L923.1 118.3 L919.2 121.3 L911.2 121.3 L906.3 128.2 L901.4 137.1 L900.4 145.0 L897.4 158.8 L892.5 162.8 L890.5 174.7 L891.5 186.5 L885.5 198.4 L875.6 208.3 L870.7 217.2" stroke="#5a5a58" stroke-width="1.5"/>
<path d="M871.7 215.0 L872.7 229.9 L863.8 228.9 L851.9 226.9 L842.0 234.8 L830.1 242.7 L824.2 239.7 L816.3 232.8 L810.3 233.8 L806.4 243.7 L796.5 245.7 L798.5 255.6 L806.4 261.5 L808.4 268.4 L818.3 266.5 L828.1 272.4 L839.0 268.4 L840.0 275.4 L832.1 277.3 L820.2 287.2 L814.3 297.1 L810.3 302.1 L788.6 303.1 L784.6 299.1 L778.7 300.1 L772.7 309.0 L769.8 318.9 L758.9 319.9 L756.9 323.8 L748.0 324.8" stroke="#5a5a58" stroke-width="1.5"/>
<path d="M748.0 330.8 L760.9 346.6 L770.8 359.5 L778.7 370.7 L787.6 381.2" stroke="#5a5a58" stroke-width="1.5"/>
<path d="M944.9 381.2 L944.9 372.3 L958.7 368.4 L961.7 360.4 L968.6 350.5 L974.6 343.6 L984.5 347.6 L994.4 354.5 L1001.3 360.4 L1002.3 366.4 L1010.2 369.9" stroke="#5a5a58" stroke-width="1.5"/>
</g>
<rect x="1057.5" y="315.9" width="21.1" height="12.9" rx="1" fill="#5b7fd6"/>
<text x="1068.0" y="325.6" font-size="9" font-weight="700" fill="#fff" text-anchor="middle">M1</text>
<rect x="1112.9" y="224.9" width="24.7" height="11.9" rx="1" fill="#5b7fd6"/>
<text x="1125.2" y="234.1" font-size="9" font-weight="700" fill="#fff" text-anchor="middle">M2</text>
<circle cx="927.1" cy="141.4" r="1.8" fill="#444"/>
<circle cx="1173.6" cy="310.0" r="1.8" fill="#444"/>
<circle cx="1254.4" cy="261.9" r="1.8" fill="#444"/>
<circle cx="1200.5" cy="285.6" r="2.1" fill="#f26a21" stroke="#fff" stroke-width="0.8"/>
<circle cx="757.3" cy="261.9" r="1.4" fill="#f26a21"/>
<text x="816.3" y="111.0" font-size="14.5" fill="#4f4f4f" textLength="48.4" lengthAdjust="spacingAndGlyphs" stroke="#fff" stroke-opacity="0.75" stroke-width="2.2" paint-order="stroke" stroke-linejoin="round">Milford</text>
<text x="880.6" y="157.9" font-size="15.5" fill="#4f4f4f" textLength="95.9" lengthAdjust="spacingAndGlyphs" stroke="#fff" stroke-opacity="0.75" stroke-width="2.2" paint-order="stroke" stroke-linejoin="round">Londonderry</text>
<text x="910.9" y="174.7" font-size="13.5" fill="#4f4f4f" textLength="35.0" lengthAdjust="spacingAndGlyphs" stroke="#fff" stroke-opacity="0.75" stroke-width="2.2" paint-order="stroke" stroke-linejoin="round">Derry</text>
<text x="790.9" y="213.3" font-size="14.5" fill="#4f4f4f" textLength="68.9" lengthAdjust="spacingAndGlyphs" stroke="#fff" stroke-opacity="0.75" stroke-width="2.2" paint-order="stroke" stroke-linejoin="round">Ballybofey</text>
<text x="910.3" y="215.2" font-size="12" fill="#588a5e" textLength="80.1" lengthAdjust="spacingAndGlyphs" stroke="#fff" stroke-opacity="0.75" stroke-width="2.2" paint-order="stroke" stroke-linejoin="round">Sperrins AONB</text>
<text x="727.5" y="278.3" font-size="15.5" fill="#4f4f4f" textLength="64.0" lengthAdjust="spacingAndGlyphs" stroke="#fff" stroke-opacity="0.75" stroke-width="2.2" paint-order="stroke" stroke-linejoin="round">Donegal</text>
<text x="1004.2" y="79.3" font-size="15" fill="#4f4f4f" textLength="76.0" lengthAdjust="spacingAndGlyphs" stroke="#fff" stroke-opacity="0.75" stroke-width="2.2" paint-order="stroke" stroke-linejoin="round">Portstewart</text>
<text x="1051.5" y="125.6" font-size="14.5" fill="#4f4f4f" textLength="74.2" lengthAdjust="spacingAndGlyphs" stroke="#fff" stroke-opacity="0.75" stroke-width="2.2" paint-order="stroke" stroke-linejoin="round">Ballymoney</text>
<text x="1095.5" y="178.0" font-size="14.5" fill="#4f4f4f" textLength="71.2" lengthAdjust="spacingAndGlyphs" stroke="#fff" stroke-opacity="0.75" stroke-width="2.2" paint-order="stroke" stroke-linejoin="round">Ballymena</text>
<text x="1018.5" y="216.0" font-size="14.5" fill="#4f4f4f" textLength="77.5" lengthAdjust="spacingAndGlyphs" stroke="#fff" stroke-opacity="0.75" stroke-width="2.2" paint-order="stroke" stroke-linejoin="round">Magherafelt</text>
<text x="1179.2" y="226.0" font-size="15" fill="#4f4f4f" textLength="96.8" lengthAdjust="spacingAndGlyphs" stroke="#fff" stroke-opacity="0.75" stroke-width="2.2" paint-order="stroke" stroke-linejoin="round">Carrickfergus</text>
<text x="1077.3" y="258.5" font-size="15.5" fill="#4f4f4f" textLength="114.7" lengthAdjust="spacingAndGlyphs" stroke="#fff" stroke-opacity="0.75" stroke-width="2.2" paint-order="stroke" stroke-linejoin="round">Newtownabbey</text>
<text x="1227.6" y="278.3" font-size="15.5" fill="#4f4f4f" textLength="54.4" lengthAdjust="spacingAndGlyphs" stroke="#fff" stroke-opacity="0.75" stroke-width="2.2" paint-order="stroke" stroke-linejoin="round">Bangor</text>
<text x="1203.9" y="300.7" font-size="13.5" fill="#4f4f4f" textLength="44.9" lengthAdjust="spacingAndGlyphs" stroke="#fff" stroke-opacity="0.75" stroke-width="2.2" paint-order="stroke" stroke-linejoin="round">Belfast</text>
<text x="1146.5" y="327.2" font-size="15.5" fill="#4f4f4f" textLength="53.5" lengthAdjust="spacingAndGlyphs" stroke="#fff" stroke-opacity="0.75" stroke-width="2.2" paint-order="stroke" stroke-linejoin="round">Lisburn</text>
<text x="1057.5" y="345.6" font-size="15" fill="#4f4f4f" textLength="75.8" lengthAdjust="spacingAndGlyphs" stroke="#fff" stroke-opacity="0.75" stroke-width="2.2" paint-order="stroke" stroke-linejoin="round">Portadown</text>
<text x="1057.3" y="381.5" font-size="14.5" fill="#4f4f4f" textLength="53.6" lengthAdjust="spacingAndGlyphs" stroke="#fff" stroke-opacity="0.75" stroke-width="2.2" paint-order="stroke" stroke-linejoin="round">.Armagh</text>
<text x="1204.9" y="376.5" font-size="14.5" fill="#4f4f4f" textLength="83.1" lengthAdjust="spacingAndGlyphs" stroke="#fff" stroke-opacity="0.75" stroke-width="2.2" paint-order="stroke" stroke-linejoin="round">Downpatrick</text>
<text x="1358.7" y="106.4" font-size="13.3" fill="#4f4f4f" textLength="58.3" lengthAdjust="spacingAndGlyphs" stroke="#fff" stroke-opacity="0.75" stroke-width="2.2" paint-order="stroke" stroke-linejoin="round">Ballantrae</text>
<text x="1353.7" y="177.6" font-size="13.3" fill="#4f4f4f" textLength="59.3" lengthAdjust="spacingAndGlyphs" stroke="#fff" stroke-opacity="0.75" stroke-width="2.2" paint-order="stroke" stroke-linejoin="round">Stranraer</text>
<text x="1411.5" y="235.2" font-size="13.3" fill="#5a7bd0" textLength="25.5" lengthAdjust="spacingAndGlyphs" stroke="#fff" stroke-opacity="0.75" stroke-width="2.2" paint-order="stroke" stroke-linejoin="round">Luce</text>
<g fill="#2f8df5" fill-opacity="0.72" stroke="#1466dc" stroke-width="1">
<circle cx="1042.2" cy="75.3" r="9.4"/>
<circle cx="1054.1" cy="69.4" r="10.4"/>
<circle cx="1081.6" cy="66.2" r="4.6"/>
<circle cx="1134.1" cy="67.4" r="9.6"/>
<circle cx="1050.0" cy="103.8" r="8.0"/>
<circle cx="1088.1" cy="110.4" r="4.5"/>
<circle cx="1045.0" cy="144.8" r="9.6"/>
<circle cx="1130.1" cy="175.1" r="7.0"/>
<circle cx="1050.7" cy="188.1" r="4.5"/>
<circle cx="1088.5" cy="184.2" r="7.0"/>
<circle cx="1110.7" cy="193.7" r="8.0"/>
<circle cx="1080.6" cy="205.3" r="8.8"/>
<circle cx="1222.7" cy="192.5" r="8.8"/>
<circle cx="1058.1" cy="223.5" r="9.0"/>
<circle cx="1052.1" cy="247.3" r="10.4"/>
<circle cx="1037.9" cy="264.1" r="4.6"/>
<circle cx="1073.9" cy="260.9" r="9.0"/>
<circle cx="1120.6" cy="225.9" r="6.0"/>
<circle cx="1135.4" cy="234.4" r="8.8"/>
<circle cx="1183.1" cy="228.5" r="9.6"/>
<circle cx="1244.9" cy="224.9" r="7.2"/>
<circle cx="1226.3" cy="235.8" r="11.2"/>
<circle cx="1212.8" cy="246.3" r="11.6"/>
<circle cx="1199.1" cy="254.0" r="7.0"/>
</g>
<g><rect x="754" y="357.5" width="5" height="5" fill="#f25022"/><rect x="759.9" y="357.5" width="5" height="5" fill="#7fba00"/><rect x="754" y="363.4" width="5" height="5" fill="#00a4ef"/><rect x="759.9" y="363.4" width="5" height="5" fill="#ffb900"/>
<text x="767.8" y="367.4" font-size="10" fill="#737373" textLength="57.4" lengthAdjust="spacingAndGlyphs">Microsoft Bing</text></g>
<g font-size="10" stroke="#fff" stroke-opacity="0.8" stroke-width="2" paint-order="stroke" stroke-linejoin="round">
<text x="1073.3" y="368.9" fill="#000" textLength="210.2" lengthAdjust="spacingAndGlyphs">© 2025 TomTom, © 2025 Microsoft Corporation,</text>
<text x="1289.4" y="368.9" fill="#2a4b9b" textLength="80.8" lengthAdjust="spacingAndGlyphs" text-decoration="underline">© OpenStreetMap</text>
<text x="1378.9" y="368.9" fill="#2a4b9b" textLength="26.3" lengthAdjust="spacingAndGlyphs" text-decoration="underline">Terms</text>
</g>
</svg>
</section>
<!-- table -->
<section id="missed-table">
<div class="abs" style="left:750px;top:430px;width:673px;height:300.5px;overflow:hidden"><div class="t" style="left:5.80px;top:6.00px;font-size:14.67px;color:#323130;letter-spacing:-0.749px;">C002</div><div class="t" style="left:266.84px;top:6.00px;font-size:14.67px;color:#323130;">1</div><div class="t" style="left:287.20px;top:6.00px;font-size:14.67px;color:#323130;letter-spacing:0.081px;">Mia McAfee</div><div class="t" style="left:542.20px;top:6.00px;font-size:14.67px;color:#323130;letter-spacing:0.088px;">Mia</div><div class="abs" style="left:0;top:22.3px;width:673px;height:23px;background:#ededed"></div><div class="abs" style="left:105.5px;top:22.3px;width:1px;height:23px;background:#f3f3f3"></div><div class="abs" style="left:281px;top:22.3px;width:1px;height:23px;background:#f3f3f3"></div><div class="abs" style="left:535.5px;top:22.3px;width:1px;height:23px;background:#f3f3f3"></div><div class="t" style="left:5.80px;top:28.00px;font-size:14.67px;color:#323130;letter-spacing:-0.749px;">C005</div><div class="t" style="left:266.84px;top:28.00px;font-size:14.67px;color:#323130;">1</div><div class="t" style="left:287.20px;top:28.00px;font-size:14.67px;color:#323130;letter-spacing:0.094px;">David Doherty</div><div class="t" style="left:542.20px;top:28.00px;font-size:14.67px;color:#323130;letter-spacing:-0.271px;">David</div><div class="t" style="left:5.80px;top:50.00px;font-size:14.67px;color:#323130;letter-spacing:-0.749px;">C006</div><div class="t" style="left:266.84px;top:50.00px;font-size:14.67px;color:#323130;">1</div><div class="t" style="left:287.20px;top:50.00px;font-size:14.67px;color:#323130;letter-spacing:0.009px;">Richard Murray</div><div class="t" style="left:542.20px;top:50.00px;font-size:14.67px;color:#323130;letter-spacing:-0.353px;">Richard</div><div class="abs" style="left:0;top:67.0px;width:673px;height:23px;background:#ededed"></div><div class="abs" style="left:105.5px;top:67.0px;width:1px;height:23px;background:#f3f3f3"></div><div class="abs" style="left:281px;top:67.0px;width:1px;height:23px;background:#f3f3f3"></div><div class="abs" style="left:535.5px;top:67.0px;width:1px;height:23px;background:#f3f3f3"></div><div class="t" style="left:5.80px;top:73.00px;font-size:14.67px;color:#323130;letter-spacing:-0.749px;">C008</div><div class="t" style="left:266.84px;top:73.00px;font-size:14.67px;color:#323130;">1</div><div class="t" style="left:287.20px;top:73.00px;font-size:14.67px;color:#323130;letter-spacing:-0.366px;">Nancy Jackson</div><div class="t" style="left:542.20px;top:73.00px;font-size:14.67px;color:#323130;letter-spacing:-0.237px;">Nancy</div><div class="t" style="left:5.80px;top:95.00px;font-size:14.67px;color:#323130;letter-spacing:-0.749px;">C013</div><div class="t" style="left:266.84px;top:95.00px;font-size:14.67px;color:#323130;">1</div><div class="t" style="left:287.20px;top:95.00px;font-size:14.67px;color:#323130;letter-spacing:-0.048px;">Patricia McCormick</div><div class="t" style="left:542.20px;top:95.00px;font-size:14.67px;color:#323130;letter-spacing:-0.368px;">Patricia</div><div class="abs" style="left:0;top:111.6px;width:673px;height:23px;background:#ededed"></div><div class="abs" style="left:105.5px;top:111.6px;width:1px;height:23px;background:#f3f3f3"></div><div class="abs" style="left:281px;top:111.6px;width:1px;height:23px;background:#f3f3f3"></div><div class="abs" style="left:535.5px;top:111.6px;width:1px;height:23px;background:#f3f3f3"></div><div class="t" style="left:5.80px;top:117.00px;font-size:14.67px;color:#323130;letter-spacing:-0.749px;">C020</div><div class="t" style="left:266.84px;top:117.00px;font-size:14.67px;color:#323130;">1</div><div class="t" style="left:287.20px;top:117.00px;font-size:14.67px;color:#323130;letter-spacing:0.115px;">Amelia Doherty</div><div class="t" style="left:542.20px;top:117.00px;font-size:14.67px;color:#323130;letter-spacing:-0.163px;">Amelia</div><div class="t" style="left:5.80px;top:140.00px;font-size:14.67px;color:#323130;letter-spacing:-0.749px;">C021</div><div class="t" style="left:266.84px;top:140.00px;font-size:14.67px;color:#323130;">2</div><div class="t" style="left:287.20px;top:140.00px;font-size:14.67px;color:#323130;letter-spacing:0.271px;">William Murphy</div><div class="t" style="left:542.20px;top:140.00px;font-size:14.67px;color:#323130;letter-spacing:0.030px;">William</div><div class="abs" style="left:0;top:156.3px;width:673px;height:23px;background:#ededed"></div><div class="abs" style="left:105.5px;top:156.3px;width:1px;height:23px;background:#f3f3f3"></div><div class="abs" style="left:281px;top:156.3px;width:1px;height:23px;background:#f3f3f3"></div><div class="abs" style="left:535.5px;top:156.3px;width:1px;height:23px;background:#f3f3f3"></div><div class="t" style="left:5.80px;top:162.00px;font-size:14.67px;color:#323130;letter-spacing:-0.749px;">C025</div><div class="t" style="left:266.84px;top:162.00px;font-size:14.67px;color:#323130;">1</div><div class="t" style="left:287.20px;top:162.00px;font-size:14.67px;color:#323130;letter-spacing:-0.278px;">Emily McFaul</div><div class="t" style="left:542.20px;top:162.00px;font-size:14.67px;color:#323130;letter-spacing:-0.357px;">Emily</div><div class="t" style="left:5.80px;top:184.00px;font-size:14.67px;color:#323130;letter-spacing:-0.749px;">C027</div><div class="t" style="left:266.84px;top:184.00px;font-size:14.67px;color:#323130;">1</div><div class="t" style="left:287.20px;top:184.00px;font-size:14.67px;color:#323130;letter-spacing:0.016px;">Emily McDonald</div><div class="t" style="left:542.20px;top:184.00px;font-size:14.67px;color:#323130;letter-spacing:-0.357px;">Emily</div><div class="abs" style="left:0;top:201.0px;width:673px;height:23px;background:#ededed"></div><div class="abs" style="left:105.5px;top:201.0px;width:1px;height:23px;background:#f3f3f3"></div><div class="abs" style="left:281px;top:201.0px;width:1px;height:23px;background:#f3f3f3"></div><div class="abs" style="left:535.5px;top:201.0px;width:1px;height:23px;background:#f3f3f3"></div><div class="t" style="left:5.80px;top:207.00px;font-size:14.67px;color:#323130;letter-spacing:-0.749px;">C031</div><div class="t" style="left:266.84px;top:207.00px;font-size:14.67px;color:#323130;">1</div><div class="t" style="left:287.20px;top:207.00px;font-size:14.67px;color:#323130;letter-spacing:-0.114px;">Jack Martin</div><div class="t" style="left:542.20px;top:207.00px;font-size:14.67px;color:#323130;letter-spacing:-1.147px;">Jack</div><div class="t" style="left:5.80px;top:229.00px;font-size:14.67px;color:#323130;letter-spacing:-0.749px;">C032</div><div class="t" style="left:266.84px;top:229.00px;font-size:14.67px;color:#323130;">1</div><div class="t" style="left:287.20px;top:229.00px;font-size:14.67px;color:#323130;letter-spacing:0.067px;">Elizabeth Martin</div><div class="t" style="left:542.20px;top:229.00px;font-size:14.67px;color:#323130;letter-spacing:-0.225px;">Elizabeth</div><div class="abs" style="left:0;top:245.6px;width:673px;height:23px;background:#ededed"></div><div class="abs" style="left:105.5px;top:245.6px;width:1px;height:23px;background:#f3f3f3"></div><div class="abs" style="left:281px;top:245.6px;width:1px;height:23px;background:#f3f3f3"></div><div class="abs" style="left:535.5px;top:245.6px;width:1px;height:23px;background:#f3f3f3"></div><div class="t" style="left:5.80px;top:251.00px;font-size:14.67px;color:#323130;letter-spacing:-0.749px;">C033</div><div class="t" style="left:266.84px;top:251.00px;font-size:14.67px;color:#323130;">1</div><div class="t" style="left:287.20px;top:251.00px;font-size:14.67px;color:#323130;letter-spacing:0.158px;">Christopher Moore</div><div class="t" style="left:542.20px;top:251.00px;font-size:14.67px;color:#323130;letter-spacing:0.013px;">Christopher</div><div class="t" style="left:5.80px;top:274.00px;font-size:14.67px;color:#323130;letter-spacing:-0.749px;">C035</div><div class="t" style="left:266.84px;top:274.00px;font-size:14.67px;color:#323130;">1</div><div class="t" style="left:287.20px;top:274.00px;font-size:14.67px;color:#323130;letter-spacing:0.061px;">Mary Campbell</div><div class="t" style="left:542.20px;top:274.00px;font-size:14.67px;color:#323130;letter-spacing:0.107px;">Mary</div><div class="abs" style="left:0;top:290.3px;width:673px;height:23px;background:#ededed"></div><div class="abs" style="left:105.5px;top:290.3px;width:1px;height:23px;background:#f3f3f3"></div><div class="abs" style="left:281px;top:290.3px;width:1px;height:23px;background:#f3f3f3"></div><div class="abs" style="left:535.5px;top:290.3px;width:1px;height:23px;background:#f3f3f3"></div><div class="t" style="left:5.80px;top:296.00px;font-size:14.67px;color:#323130;letter-spacing:-0.749px;">C047</div><div class="t" style="left:266.84px;top:296.00px;font-size:14.67px;color:#323130;">1</div><div class="t" style="left:287.20px;top:296.00px;font-size:14.67px;color:#323130;letter-spacing:-0.909px;">Emma Johnston</div><div class="t" style="left:542.20px;top:296.00px;font-size:14.67px;color:#323130;letter-spacing:-1.786px;">Emma</div></div>
<div class="abs" style="left:750px;top:429.7px;width:673px;height:1.6px;background:#2b8cf0"></div><div class="abs" style="left:750px;top:729.6px;width:673px;height:1.4px;background:#2b8cf0"></div><div class="t" style="left:755.60px;top:404.00px;font-size:14.67px;color:#323130;letter-spacing:-0.063px;">ClientID</div><div class="t" style="left:861.40px;top:404.00px;font-size:14.67px;color:#323130;letter-spacing:-0.029px;">Visits - Missed</div><div class="t" style="left:1037.20px;top:404.00px;font-size:14.67px;color:#323130;letter-spacing:-0.174px;">FullName</div><div class="t" style="left:1292.20px;top:404.00px;font-size:14.67px;color:#323130;letter-spacing:-0.402px;">Forename</div><div class="t" style="left:755.60px;top:735.00px;font-size:14.67px;font-weight:700;letter-spacing:0.095px;">Total</div><div class="t" style="left:1000.83px;top:735.00px;font-size:14.67px;font-weight:700;">106</div><div class="abs" style="left:750.7px;top:754px;width:662px;height:7.5px;border-radius:4px;background:#adadad"></div><div class="abs" style="left:1424.3px;top:401px;width:7.4px;height:47.7px;border-radius:4px;background:#adadad"></div>
</section>
<!-- page tabs -->
<nav id="tabs">
<div class="abs" style="left:0;top:795px;width:1550px;height:34px;background:#f3f2f1"></div><div class="abs" style="left:111.5px;top:795px;width:501.5px;height:34px;background:#fff"></div><div class="abs" style="left:111px;top:795px;width:1px;height:34px;background:#a3a19f"></div><div class="abs" style="left:221px;top:795px;width:1px;height:34px;background:#c8c6c4"></div><div class="abs" style="left:323px;top:795px;width:1px;height:34px;background:#c8c6c4"></div><div class="abs" style="left:435px;top:795px;width:1px;height:34px;background:#c8c6c4"></div><div class="abs" style="left:530px;top:795px;width:1px;height:34px;background:#c8c6c4"></div><div class="abs" style="left:221px;top:826px;width:103px;height:3px;background:#117865"></div><div class="abs" style="left:613px;top:795px;width:39px;height:34px;background:#117865"></div><svg width="1845" height="829" style="left:0;top:0"><path d="M632.2 806.3 V817.7 M626.5 812 H637.9" stroke="#fff" stroke-width="2.3"/><g fill="#fff" stroke="#55534f" stroke-width="1.4"><path d="M-3 803.1 H14.3 V813 H-3"/><path d="M5.4 813 V815.3 M2 815.6 H8.8" fill="none" stroke-width="1.1"/><rect x="44.6" y="800.8" width="10.8" height="18.4" rx="1.4"/><path d="M48.2 816.8 H52" fill="none" stroke-width="1.5"/></g><path d="M0 824.5 H16.6" stroke="#117865" stroke-width="2.7" stroke-linecap="round"/><path d="M82.3 809.2 V816.7 L77.7 813 Z M99.8 809.2 V816.7 L104.4 813 Z" fill="#c8c6c4"/></svg><div class="t" style="left:132.50px;top:808.00px;font-size:12px;letter-spacing:-0.509px;">Executive KPI</div><div class="t" style="left:242.60px;top:808.00px;font-size:12px;letter-spacing:0.122px;-webkit-text-stroke:0.25px #252423;">Operations</div><div class="t" style="left:343.80px;top:808.00px;font-size:12px;letter-spacing:-0.322px;">Runs &amp; Rotas</div><div class="t" style="left:456.00px;top:808.00px;font-size:12px;">Workforce</div><div class="t" style="left:551.80px;top:808.00px;font-size:12px;letter-spacing:-0.451px;">Finance</div>
</nav>
<!-- panes -->
<aside id="panes">
<div class="abs" style="left:1517px;top:0;width:1.3px;height:795px;background:#a19f9d"></div><div class="abs" style="left:1518.3px;top:0;width:32px;height:795px;background:#fff"></div><div class="abs" style="left:1550px;top:0;width:295px;height:829px;background:#f3f2f1"></div><div class="abs" style="left:1550px;top:0;width:1px;height:829px;background:#dcdad8"></div><div class="abs" style="left:1585px;top:0;width:1px;height:829px;background:#dcdad8"></div><svg width="1845" height="829" style="left:0;top:0"><g fill="none" stroke="#252423" stroke-width="1.3"><path d="M1534.3 -0.5 L1529 3.5 L1534.3 7.5 M1540.3 -0.5 L1535 3.5 L1540.3 7.5"/><path d="M1568.3 -0.5 L1563 3.5 L1568.3 7.5 M1574.3 -0.5 L1569 3.5 L1574.3 7.5"/><path d="M1541.5 24.8 V36.5 L1534.5 32.2 H1530.2 V29 H1534.5 Z" stroke-linejoin="round"/></g></svg><div class="t" style="left:0;top:45.3px;font-size:15px;transform-origin:0 0;transform:translate(1541.6px,0) rotate(90deg);letter-spacing:0.2px;-webkit-text-stroke:0.5px #252423">Filters</div><div class="t" style="left:0;top:22.8px;font-size:15px;transform-origin:0 0;transform:translate(1574px,0) rotate(90deg);letter-spacing:0.47px;-webkit-text-stroke:0.5px #252423">Visualizations</div><div class="t" style="left:1594.60px;top:-5.00px;font-size:16px;letter-spacing:-0.466px;-webkit-text-stroke:0.45px #252423;">Data</div><div class="abs" style="left:1590.3px;top:28.2px;width:270px;height:22.2px;background:#fff;border:1px solid #d1d1d1;border-bottom:1.4px solid #616161;border-radius:4px"></div><div class="t" style="left:1624.40px;top:34.00px;font-size:13.5px;color:#605e5c;letter-spacing:-0.496px;">Search</div><svg width="1845" height="829" style="left:0;top:0"><circle cx="1608.5" cy="38.4" r="4.9" fill="none" stroke="#424242" stroke-width="1.05"/><path d="M1612.2 42.1 L1616.7 46.7" stroke="#424242" stroke-width="1.2" stroke-linecap="round"/><!--s--><path d="M1843 7 L1846 4" stroke="#252423" stroke-width="1.5"/><path d="M1602 67.2 L1607.6 73.1 L1602 79.0" fill="none" stroke="#605e5c" stroke-width="1.1"/><g fill="none" stroke="#242424" stroke-width="1.05"><rect x="1615.5" y="66.5" width="10" height="12" rx="2.3"/><rect x="1617.6" y="68.4" width="5.8" height="2.4" rx="1.1"/><path d="M1618.2 72.9 h1.6 m1.4 0 h1.6 M1618.2 75.9 h1.6 m1.4 0 h1.6" stroke-width="1.5"/><path d="M1618.3 80.3 H1625.2 Q1627.5 80.3 1627.5 78.0 V69.0" stroke-linecap="round"/></g><circle cx="1627.1" cy="78.9" r="5.9" fill="#117a65"/><path d="M1625.0 79.1 l1.4 1.5 l2.8 -3.1" fill="none" stroke="#fff" stroke-width="1.3"/><path d="M1602 91.2 L1607.6 97.1 L1602 103.0" fill="none" stroke="#605e5c" stroke-width="1.1"/><g fill="none" stroke="#242424" stroke-width="1.05"><rect x="1615.5" y="91.5" width="11" height="11" rx="2.6"/><path d="M1618.5 91.5 V102.5 M1623.5 91.5 V102.5 M1615.5 94.5 H1626.5 M1615.5 99.5 H1626.5"/></g><path d="M1602 115.2 L1607.6 121.1 L1602 127.0" fill="none" stroke="#605e5c" stroke-width="1.1"/><g fill="none" stroke="#242424" stroke-width="1.05"><rect x="1615.5" y="115.5" width="11" height="11" rx="2.6"/><path d="M1618.5 115.5 V126.5 M1623.5 115.5 V126.5 M1615.5 118.5 H1626.5 M1615.5 123.5 H1626.5"/></g><path d="M1602 139.2 L1607.6 145.1 L1602 151.0" fill="none" stroke="#605e5c" stroke-width="1.1"/><g fill="none" stroke="#242424" stroke-width="1.05"><rect x="1615.5" y="139.5" width="11" height="11" rx="2.6"/><path d="M1618.5 139.5 V150.5 M1623.5 139.5 V150.5 M1615.5 142.5 H1626.5 M1615.5 147.5 H1626.5"/></g><circle cx="1627.1" cy="150.9" r="5.9" fill="#117a65"/><path d="M1625.0 151.1 l1.4 1.5 l2.8 -3.1" fill="none" stroke="#fff" stroke-width="1.3"/><path d="M1602 163.2 L1607.6 169.1 L1602 175.0" fill="none" stroke="#605e5c" stroke-width="1.1"/><g fill="none" stroke="#242424" stroke-width="1.05"><rect x="1615.5" y="163.5" width="11" height="11" rx="2.6"/><path d="M1618.5 163.5 V174.5 M1623.5 163.5 V174.5 M1615.5 166.5 H1626.5 M1615.5 171.5 H1626.5"/></g><path d="M1602 187.2 L1607.6 193.1 L1602 199.0" fill="none" stroke="#605e5c" stroke-width="1.1"/><g fill="none" stroke="#242424" stroke-width="1.05"><path d="M1626.5 190.5 V190.0 Q1626.5 187.5 1624 187.5 H1618 Q1615.5 187.5 1615.5 190.0 V196.0 Q1615.5 198.5 1618 198.5 H1621 M1618.5 187.5 V198.5 M1623.5 187.5 V190.0 M1615.5 190.5 H1621.5 M1615.5 195.5 H1620.5"/><rect x="1622.5" y="191.5" width="6" height="9" rx="1.6" fill="#f3f2f1"/><path d="M1622.5 194.4 H1628.5 M1625.5 194.4 V200.5 M1622.5 196.7 H1628.5 M1622.5 198.6 H1628.5" stroke-width="0.9"/><path d="M1623 192.1 H1628" stroke-width="0.8"/></g><path d="M1602 211.2 L1607.6 217.1 L1602 223.0" fill="none" stroke="#605e5c" stroke-width="1.1"/><g fill="none" stroke="#242424" stroke-width="1.05"><rect x="1615.5" y="211.5" width="11" height="11" rx="2.6"/><path d="M1618.5 211.5 V222.5 M1623.5 211.5 V222.5 M1615.5 214.5 H1626.5 M1615.5 219.5 H1626.5"/></g><path d="M1602 235.2 L1607.6 241.1 L1602 247.0" fill="none" stroke="#605e5c" stroke-width="1.1"/><g fill="none" stroke="#242424" stroke-width="1.05"><rect x="1615.5" y="235.5" width="11" height="11" rx="2.6"/><path d="M1618.5 235.5 V246.5 M1623.5 235.5 V246.5 M1615.5 238.5 H1626.5 M1615.5 243.5 H1626.5"/></g><path d="M1602 259.2 L1607.6 265.1 L1602 271.0" fill="none" stroke="#605e5c" stroke-width="1.1"/><g fill="none" stroke="#242424" stroke-width="1.05"><rect x="1615.5" y="259.5" width="11" height="11" rx="2.6"/><path d="M1618.5 259.5 V270.5 M1623.5 259.5 V270.5 M1615.5 262.5 H1626.5 M1615.5 267.5 H1626.5"/></g><path d="M1602 283.2 L1607.6 289.1 L1602 295.0" fill="none" stroke="#605e5c" stroke-width="1.1"/><g fill="none" stroke="#242424" stroke-width="1.05"><rect x="1615.5" y="283.5" width="11" height="11" rx="2.6"/><path d="M1618.5 283.5 V294.5 M1623.5 283.5 V294.5 M1615.5 286.5 H1626.5 M1615.5 291.5 H1626.5"/></g><path d="M1602 307.2 L1607.6 313.1 L1602 319.0" fill="none" stroke="#605e5c" stroke-width="1.1"/><g fill="none" stroke="#242424" stroke-width="1.05"><rect x="1615.5" y="307.5" width="11" height="11" rx="2.6"/><path d="M1618.5 307.5 V318.5 M1623.5 307.5 V318.5 M1615.5 310.5 H1626.5 M1615.5 315.5 H1626.5"/></g><path d="M1602 331.2 L1607.6 337.1 L1602 343.0" fill="none" stroke="#605e5c" stroke-width="1.1"/><g fill="none" stroke="#242424" stroke-width="1.05"><rect x="1615.5" y="331.5" width="11" height="11" rx="2.6"/><path d="M1618.5 331.5 V342.5 M1623.5 331.5 V342.5 M1615.5 334.5 H1626.5 M1615.5 339.5 H1626.5"/></g><path d="M1602 355.2 L1607.6 361.1 L1602 367.0" fill="none" stroke="#605e5c" stroke-width="1.1"/><g fill="none" stroke="#242424" stroke-width="1.05"><rect x="1615.5" y="355.5" width="11" height="11" rx="2.6"/><path d="M1618.5 355.5 V366.5 M1623.5 355.5 V366.5 M1615.5 358.5 H1626.5 M1615.5 363.5 H1626.5"/></g><path d="M1602 379.2 L1607.6 385.1 L1602 391.0" fill="none" stroke="#605e5c" stroke-width="1.1"/><g fill="none" stroke="#242424" stroke-width="1.05"><rect x="1615.5" y="379.5" width="11" height="11" rx="2.6"/><path d="M1618.5 379.5 V390.5 M1623.5 379.5 V390.5 M1615.5 382.5 H1626.5 M1615.5 387.5 H1626.5"/></g><path d="M1602 403.2 L1607.6 409.1 L1602 415.0" fill="none" stroke="#605e5c" stroke-width="1.1"/><g fill="none" stroke="#242424" stroke-width="1.05"><rect x="1615.5" y="403.5" width="11" height="11" rx="2.6"/><path d="M1618.5 403.5 V414.5 M1623.5 403.5 V414.5 M1615.5 406.5 H1626.5 M1615.5 411.5 H1626.5"/></g><path d="M1602 427.2 L1607.6 433.1 L1602 439.0" fill="none" stroke="#605e5c" stroke-width="1.1"/><g fill="none" stroke="#242424" stroke-width="1.05"><rect x="1615.5" y="427.5" width="11" height="11" rx="2.6"/><path d="M1618.5 427.5 V438.5 M1623.5 427.5 V438.5 M1615.5 430.5 H1626.5 M1615.5 435.5 H1626.5"/></g><path d="M1602 451.2 L1607.6 457.1 L1602 463.0" fill="none" stroke="#605e5c" stroke-width="1.1"/><g fill="none" stroke="#242424" stroke-width="1.05"><rect x="1615.5" y="451.5" width="11" height="11" rx="2.6"/><path d="M1618.5 451.5 V462.5 M1623.5 451.5 V462.5 M1615.5 454.5 H1626.5 M1615.5 459.5 H1626.5"/></g><path d="M1602 475.2 L1607.6 481.1 L1602 487.0" fill="none" stroke="#605e5c" stroke-width="1.1"/><g fill="none" stroke="#242424" stroke-width="1.05"><rect x="1615.5" y="475.5" width="11" height="11" rx="2.6"/><path d="M1618.5 475.5 V486.5 M1623.5 475.5 V486.5 M1615.5 478.5 H1626.5 M1615.5 483.5 H1626.5"/></g><path d="M1602 499.2 L1607.6 505.1 L1602 511.0" fill="none" stroke="#605e5c" stroke-width="1.1"/><g fill="none" stroke="#242424" stroke-width="1.05"><rect x="1615.5" y="499.5" width="11" height="11" rx="2.6"/><path d="M1618.5 499.5 V510.5 M1623.5 499.5 V510.5 M1615.5 502.5 H1626.5 M1615.5 507.5 H1626.5"/></g></svg><div class="t" style="left:1633.00px;top:68.00px;font-size:12px;transform:scaleX(0.72);transform-origin:0 0;">_</div><div class="t" style="left:1638.40px;top:68.00px;font-size:12px;color:#323130;letter-spacing:-0.441px;">Measures</div><div class="t" style="left:1633.30px;top:92.00px;font-size:12px;color:#323130;letter-spacing:-0.052px;">Audits</div><div class="t" style="left:1633.30px;top:116.00px;font-size:12px;color:#323130;letter-spacing:-0.620px;">CarePackages</div><div class="t" style="left:1633.30px;top:140.00px;font-size:12px;color:#323130;letter-spacing:-0.265px;">Clients</div><div class="t" style="left:1633.30px;top:164.00px;font-size:12px;color:#323130;letter-spacing:-0.070px;">Complaints</div><div class="t" style="left:1633.30px;top:188.00px;font-size:12px;color:#323130;letter-spacing:-0.353px;">Date</div><div class="t" style="left:1633.30px;top:212.00px;font-size:12px;color:#323130;letter-spacing:-0.729px;">Expenses</div><div class="t" style="left:1633.30px;top:236.00px;font-size:12px;color:#323130;letter-spacing:-0.054px;">Incidents</div><div class="t" style="left:1633.30px;top:260.00px;font-size:12px;color:#323130;letter-spacing:-0.335px;">KPIMetrics</div><div class="t" style="left:1633.30px;top:284.00px;font-size:12px;color:#323130;letter-spacing:-0.167px;">MileageClaims</div><div class="t" style="left:1633.30px;top:308.00px;font-size:12px;color:#323130;letter-spacing:-0.257px;">RemittanceReturns</div><div class="t" style="left:1633.30px;top:332.00px;font-size:12px;color:#323130;letter-spacing:-0.311px;">RotaRunsDetail</div><div class="t" style="left:1633.30px;top:356.00px;font-size:12px;color:#323130;letter-spacing:-0.321px;">RQIA_Inspections</div><div class="t" style="left:1633.30px;top:380.00px;font-size:12px;color:#323130;letter-spacing:-0.321px;">Run_Assignments</div><div class="t" style="left:1633.30px;top:404.00px;font-size:12px;color:#323130;letter-spacing:-0.905px;">Runs</div><div class="t" style="left:1633.30px;top:428.00px;font-size:12px;color:#323130;letter-spacing:-0.292px;">Staff</div><div class="t" style="left:1633.30px;top:452.00px;font-size:12px;color:#323130;letter-spacing:-0.271px;">TrainingRecords</div><div class="t" style="left:1633.30px;top:476.00px;font-size:12px;color:#323130;letter-spacing:-0.479px;">Trust_Payments</div><div class="t" style="left:1633.30px;top:500.00px;font-size:12px;color:#323130;letter-spacing:-0.291px;">Visits</div>
</aside>
</body></html>
